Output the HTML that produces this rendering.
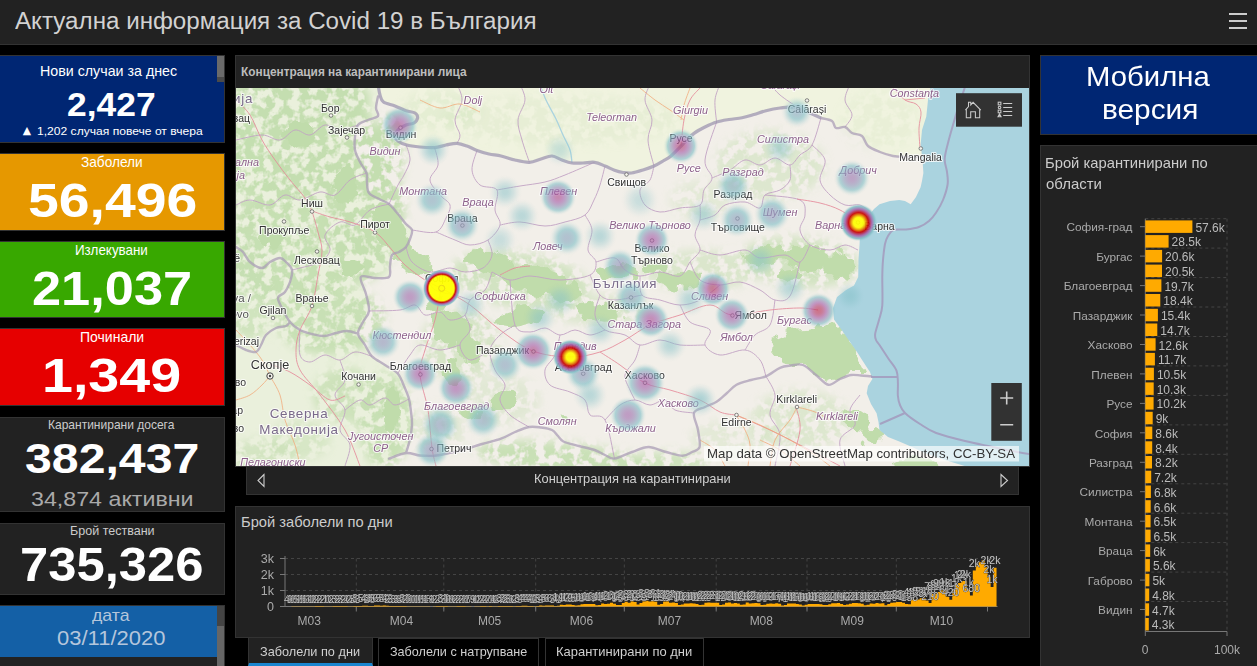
<!DOCTYPE html>
<html lang="bg">
<head>
<meta charset="utf-8">
<title>Актуална информация за Covid 19 в България</title>
<style>
*{box-sizing:border-box;margin:0;padding:0}
html,body{width:1257px;height:666px;overflow:hidden;background:#000;font-family:"Liberation Sans",sans-serif;color:#ccc}
.abs{position:absolute}
.t{position:absolute;white-space:nowrap;line-height:1;transform-origin:0 0}
#hdr{left:0;top:0;width:1257px;height:45px;background:#222;border-bottom:1px solid #333}
.card{position:absolute;left:0;width:225px;border:1px solid #333;border-left:none;overflow:hidden}
.panel{position:absolute;background:#222;border:1px solid #333}
svg{position:absolute;left:0;top:0}
svg text{font-family:"Liberation Sans",sans-serif}
</style>
</head>
<body>
<div id="hdr" class="abs">
<div class="t" style="left:14.7px;top:10.4px;font-size:23.5px;color:#d2d2d2;transform:scaleX(1.0282);">Актуална информация за Covid 19 в България</div>
<div class="abs" style="left:1229px;top:13px;width:18px;height:2px;background:#ccc"></div>
<div class="abs" style="left:1229px;top:20px;width:18px;height:2px;background:#ccc"></div>
<div class="abs" style="left:1229px;top:27px;width:18px;height:2px;background:#ccc"></div>
</div>

<div class="card" style="top:55px;height:88px;background:#002673">
  <div class="abs" style="left:217px;top:0;width:8px;height:21px;background:#6a6a6a"></div>
  <div class="abs" style="left:217px;top:21px;width:8px;height:5px;background:#4a4a4a"></div>
</div>
<div class="card" style="top:153px;height:78px;background:#e69800"></div>
<div class="card" style="top:241px;height:77px;background:#38a800"></div>
<div class="card" style="top:328px;height:78px;background:#e60000"></div>
<div class="card" style="top:417px;height:95px;background:#222"></div>
<div class="card" style="top:523px;height:72px;background:#222"></div>
<div class="card" style="top:605px;height:70px;background:#222">
  <div class="abs" style="left:0;top:0;width:217px;height:51px;background:#1460a6"></div>
  <div class="abs" style="left:217px;top:0;width:8px;height:20px;background:#444"></div>
  <div class="abs" style="left:217px;top:20px;width:8px;height:50px;background:#666"></div>
</div>
<div class="t" style="left:39.7px;top:64.2px;font-size:14.2px;color:#fff;transform:scaleX(1.0039);">Нови случаи за днес</div>
<div class="t" style="left:67.4px;top:88.2px;font-size:33.5px;color:#fff;transform:scaleX(1.0581);font-weight:bold;">2,427</div>
<div class="t" style="left:22.8px;top:126.2px;font-size:10.8px;color:#fff;font-family:'DejaVu Sans',sans-serif">▲</div>
<div class="t" style="left:36.6px;top:126.4px;font-size:11.2px;color:#fff;transform:scaleX(1.0804);">1,202 случая повече от вчера</div>
<div class="t" style="left:80.9px;top:155.1px;font-size:14.2px;color:#fff;transform:scaleX(0.9637);">Заболели</div>
<div class="t" style="left:27.7px;top:176.1px;font-size:49px;color:#fff;transform:scaleX(1.1287);font-weight:bold;">56,496</div>
<div class="t" style="left:75.4px;top:243.0px;font-size:14.2px;color:#fff;transform:scaleX(0.9437);">Излекувани</div>
<div class="t" style="left:32.0px;top:263.5px;font-size:49px;color:#fff;transform:scaleX(1.0683);font-weight:bold;">21,037</div>
<div class="t" style="left:80.0px;top:329.9px;font-size:14.2px;color:#fff;transform:scaleX(0.9869);">Починали</div>
<div class="t" style="left:42.3px;top:350.6px;font-size:49px;color:#fff;transform:scaleX(1.1343);font-weight:bold;">1,349</div>
<div class="t" style="left:47.7px;top:418.5px;font-size:12.2px;color:#ccc;transform:scaleX(0.9853);">Карантинирани досега</div>
<div class="t" style="left:24.5px;top:436.8px;font-size:43px;color:#fff;transform:scaleX(1.1214);font-weight:bold;">382,437</div>
<div class="t" style="left:30.7px;top:487.6px;font-size:21px;color:#aaa;transform:scaleX(1.1058);">34,874 активни</div>
<div class="t" style="left:70.0px;top:524.6px;font-size:12.2px;color:#ccc;transform:scaleX(1.0280);">Брой тествани</div>
<div class="t" style="left:20.3px;top:540.3px;font-size:49px;color:#fff;transform:scaleX(1.0353);font-weight:bold;">735,326</div>
<div class="t" style="left:92.1px;top:607.0px;font-size:17px;color:#b4c6dc;transform:scaleX(1.0389);">дата</div>
<div class="t" style="left:57.0px;top:627.9px;font-size:20.5px;color:#b4c6dc;transform:scaleX(1.0724);">03/11/2020</div>
<div class="panel" style="left:235px;top:55px;width:795px;height:412px"></div>
<div class="panel" style="left:246px;top:466px;width:773px;height:29px"></div>
<svg width="1257" height="666" viewBox="0 0 1257 666">
<defs><clipPath id="mc"><rect x="236" y="88" width="793" height="378"/></clipPath>
<filter id="b6" x="-20%" y="-20%" width="140%" height="140%"><feGaussianBlur stdDeviation="5"/></filter>
<filter id="b3" x="-20%" y="-20%" width="140%" height="140%"><feGaussianBlur stdDeviation="2.5"/></filter>
<filter id="mot" x="0" y="0" width="100%" height="100%" filterUnits="userSpaceOnUse" primitiveUnits="userSpaceOnUse"><feGaussianBlur in="SourceGraphic" stdDeviation="5" result="bl"/><feTurbulence type="fractalNoise" baseFrequency="0.11" numOctaves="3" seed="4" result="n"/><feColorMatrix in="n" type="matrix" values="0 0 0 0 0  0 0 0 0 0  0 0 0 0 0  6 0 0 0 -2.35" result="na"/><feComposite in="bl" in2="na" operator="in"/></filter>
<filter id="rough" x="0" y="0" width="100%" height="100%" filterUnits="userSpaceOnUse" primitiveUnits="userSpaceOnUse"><feTurbulence type="fractalNoise" baseFrequency="0.09" numOctaves="2" seed="9" result="n"/><feDisplacementMap in="SourceGraphic" in2="n" scale="16" xChannelSelector="R" yChannelSelector="G"/></filter>
<radialGradient id="h3"><stop offset="0.000" stop-color="#85c1c8" stop-opacity="0.38"/><stop offset="0.062" stop-color="#85c1c8" stop-opacity="0.38"/><stop offset="0.125" stop-color="#85c1c8" stop-opacity="0.37"/><stop offset="0.188" stop-color="#85c1c8" stop-opacity="0.36"/><stop offset="0.250" stop-color="#85c1c8" stop-opacity="0.34"/><stop offset="0.312" stop-color="#85c1c8" stop-opacity="0.31"/><stop offset="0.375" stop-color="#85c1c8" stop-opacity="0.28"/><stop offset="0.438" stop-color="#85c1c8" stop-opacity="0.25"/><stop offset="0.500" stop-color="#85c1c8" stop-opacity="0.22"/><stop offset="0.562" stop-color="#85c1c8" stop-opacity="0.18"/><stop offset="0.625" stop-color="#85c1c8" stop-opacity="0.14"/><stop offset="0.688" stop-color="#85c1c8" stop-opacity="0.11"/><stop offset="0.750" stop-color="#85c1c8" stop-opacity="0.07"/><stop offset="0.812" stop-color="#85c1c8" stop-opacity="0.04"/><stop offset="0.875" stop-color="#85c1c8" stop-opacity="0.02"/><stop offset="0.938" stop-color="#85c1c8" stop-opacity="0.01"/><stop offset="1.000" stop-color="#85c1c8" stop-opacity="0.00"/></radialGradient><radialGradient id="h4"><stop offset="0.000" stop-color="#85c1c8" stop-opacity="0.51"/><stop offset="0.062" stop-color="#85c1c8" stop-opacity="0.51"/><stop offset="0.125" stop-color="#85c1c8" stop-opacity="0.50"/><stop offset="0.188" stop-color="#85c1c8" stop-opacity="0.48"/><stop offset="0.250" stop-color="#85c1c8" stop-opacity="0.45"/><stop offset="0.312" stop-color="#85c1c8" stop-opacity="0.42"/><stop offset="0.375" stop-color="#85c1c8" stop-opacity="0.38"/><stop offset="0.438" stop-color="#85c1c8" stop-opacity="0.33"/><stop offset="0.500" stop-color="#85c1c8" stop-opacity="0.29"/><stop offset="0.562" stop-color="#85c1c8" stop-opacity="0.24"/><stop offset="0.625" stop-color="#85c1c8" stop-opacity="0.19"/><stop offset="0.688" stop-color="#85c1c8" stop-opacity="0.14"/><stop offset="0.750" stop-color="#85c1c8" stop-opacity="0.10"/><stop offset="0.812" stop-color="#85c1c8" stop-opacity="0.06"/><stop offset="0.875" stop-color="#85c1c8" stop-opacity="0.03"/><stop offset="0.938" stop-color="#85c1c8" stop-opacity="0.01"/><stop offset="1.000" stop-color="#85c1c8" stop-opacity="0.00"/></radialGradient><radialGradient id="h5"><stop offset="0.000" stop-color="#85c1c8" stop-opacity="0.64"/><stop offset="0.062" stop-color="#85c1c8" stop-opacity="0.64"/><stop offset="0.125" stop-color="#85c1c8" stop-opacity="0.62"/><stop offset="0.188" stop-color="#85c1c8" stop-opacity="0.60"/><stop offset="0.250" stop-color="#85c1c8" stop-opacity="0.56"/><stop offset="0.312" stop-color="#85c1c8" stop-opacity="0.52"/><stop offset="0.375" stop-color="#85c1c8" stop-opacity="0.47"/><stop offset="0.438" stop-color="#85c1c8" stop-opacity="0.42"/><stop offset="0.500" stop-color="#85c1c8" stop-opacity="0.36"/><stop offset="0.562" stop-color="#85c1c8" stop-opacity="0.30"/><stop offset="0.625" stop-color="#85c1c8" stop-opacity="0.24"/><stop offset="0.688" stop-color="#85c1c8" stop-opacity="0.18"/><stop offset="0.750" stop-color="#85c1c8" stop-opacity="0.12"/><stop offset="0.812" stop-color="#85c1c8" stop-opacity="0.07"/><stop offset="0.875" stop-color="#85c1c8" stop-opacity="0.04"/><stop offset="0.938" stop-color="#85c1c8" stop-opacity="0.01"/><stop offset="1.000" stop-color="#85c1c8" stop-opacity="0.00"/></radialGradient><radialGradient id="h8"><stop offset="0.000" stop-color="#8caec2" stop-opacity="0.64"/><stop offset="0.062" stop-color="#8baec2" stop-opacity="0.64"/><stop offset="0.125" stop-color="#8bafc2" stop-opacity="0.64"/><stop offset="0.188" stop-color="#8ab1c3" stop-opacity="0.64"/><stop offset="0.250" stop-color="#89b4c4" stop-opacity="0.64"/><stop offset="0.312" stop-color="#88b7c5" stop-opacity="0.64"/><stop offset="0.375" stop-color="#87bbc6" stop-opacity="0.64"/><stop offset="0.438" stop-color="#86c0c8" stop-opacity="0.64"/><stop offset="0.500" stop-color="#85c1c8" stop-opacity="0.58"/><stop offset="0.562" stop-color="#85c1c8" stop-opacity="0.48"/><stop offset="0.625" stop-color="#85c1c8" stop-opacity="0.38"/><stop offset="0.688" stop-color="#85c1c8" stop-opacity="0.28"/><stop offset="0.750" stop-color="#85c1c8" stop-opacity="0.20"/><stop offset="0.812" stop-color="#85c1c8" stop-opacity="0.12"/><stop offset="0.875" stop-color="#85c1c8" stop-opacity="0.06"/><stop offset="0.938" stop-color="#85c1c8" stop-opacity="0.02"/><stop offset="1.000" stop-color="#85c1c8" stop-opacity="0.00"/></radialGradient><radialGradient id="h9"><stop offset="0.000" stop-color="#8ea7c0" stop-opacity="0.64"/><stop offset="0.062" stop-color="#8ea8c0" stop-opacity="0.64"/><stop offset="0.125" stop-color="#8da9c1" stop-opacity="0.64"/><stop offset="0.188" stop-color="#8cabc1" stop-opacity="0.64"/><stop offset="0.250" stop-color="#8baec2" stop-opacity="0.64"/><stop offset="0.312" stop-color="#8ab2c3" stop-opacity="0.64"/><stop offset="0.375" stop-color="#89b6c5" stop-opacity="0.64"/><stop offset="0.438" stop-color="#87bbc6" stop-opacity="0.64"/><stop offset="0.500" stop-color="#85c1c8" stop-opacity="0.64"/><stop offset="0.562" stop-color="#85c1c8" stop-opacity="0.54"/><stop offset="0.625" stop-color="#85c1c8" stop-opacity="0.43"/><stop offset="0.688" stop-color="#85c1c8" stop-opacity="0.32"/><stop offset="0.750" stop-color="#85c1c8" stop-opacity="0.22"/><stop offset="0.812" stop-color="#85c1c8" stop-opacity="0.13"/><stop offset="0.875" stop-color="#85c1c8" stop-opacity="0.06"/><stop offset="0.938" stop-color="#85c1c8" stop-opacity="0.02"/><stop offset="1.000" stop-color="#85c1c8" stop-opacity="0.00"/></radialGradient><radialGradient id="h10"><stop offset="0.000" stop-color="#90a1be" stop-opacity="0.64"/><stop offset="0.062" stop-color="#90a1be" stop-opacity="0.64"/><stop offset="0.125" stop-color="#8fa3bf" stop-opacity="0.64"/><stop offset="0.188" stop-color="#8ea5bf" stop-opacity="0.64"/><stop offset="0.250" stop-color="#8da9c0" stop-opacity="0.64"/><stop offset="0.312" stop-color="#8cadc2" stop-opacity="0.64"/><stop offset="0.375" stop-color="#8ab2c3" stop-opacity="0.64"/><stop offset="0.438" stop-color="#88b7c5" stop-opacity="0.64"/><stop offset="0.500" stop-color="#86bdc7" stop-opacity="0.64"/><stop offset="0.562" stop-color="#85c1c8" stop-opacity="0.60"/><stop offset="0.625" stop-color="#85c1c8" stop-opacity="0.48"/><stop offset="0.688" stop-color="#85c1c8" stop-opacity="0.36"/><stop offset="0.750" stop-color="#85c1c8" stop-opacity="0.24"/><stop offset="0.812" stop-color="#85c1c8" stop-opacity="0.15"/><stop offset="0.875" stop-color="#85c1c8" stop-opacity="0.07"/><stop offset="0.938" stop-color="#85c1c8" stop-opacity="0.02"/><stop offset="1.000" stop-color="#85c1c8" stop-opacity="0.00"/></radialGradient><radialGradient id="h11"><stop offset="0.000" stop-color="#929bbc" stop-opacity="0.64"/><stop offset="0.062" stop-color="#929bbc" stop-opacity="0.64"/><stop offset="0.125" stop-color="#929dbd" stop-opacity="0.64"/><stop offset="0.188" stop-color="#919fbe" stop-opacity="0.64"/><stop offset="0.250" stop-color="#8fa3bf" stop-opacity="0.64"/><stop offset="0.312" stop-color="#8ea8c0" stop-opacity="0.64"/><stop offset="0.375" stop-color="#8cadc2" stop-opacity="0.64"/><stop offset="0.438" stop-color="#8ab3c4" stop-opacity="0.64"/><stop offset="0.500" stop-color="#88b9c6" stop-opacity="0.64"/><stop offset="0.562" stop-color="#85c0c8" stop-opacity="0.64"/><stop offset="0.625" stop-color="#85c1c8" stop-opacity="0.52"/><stop offset="0.688" stop-color="#85c1c8" stop-opacity="0.39"/><stop offset="0.750" stop-color="#85c1c8" stop-opacity="0.27"/><stop offset="0.812" stop-color="#85c1c8" stop-opacity="0.16"/><stop offset="0.875" stop-color="#85c1c8" stop-opacity="0.08"/><stop offset="0.938" stop-color="#85c1c8" stop-opacity="0.02"/><stop offset="1.000" stop-color="#85c1c8" stop-opacity="0.00"/></radialGradient><radialGradient id="h12"><stop offset="0.000" stop-color="#9594ba" stop-opacity="0.64"/><stop offset="0.062" stop-color="#9595ba" stop-opacity="0.64"/><stop offset="0.125" stop-color="#9497bb" stop-opacity="0.64"/><stop offset="0.188" stop-color="#939abc" stop-opacity="0.64"/><stop offset="0.250" stop-color="#919ebd" stop-opacity="0.64"/><stop offset="0.312" stop-color="#8fa2be" stop-opacity="0.64"/><stop offset="0.375" stop-color="#8da8c0" stop-opacity="0.64"/><stop offset="0.438" stop-color="#8bafc2" stop-opacity="0.64"/><stop offset="0.500" stop-color="#89b6c4" stop-opacity="0.64"/><stop offset="0.562" stop-color="#86bdc7" stop-opacity="0.64"/><stop offset="0.625" stop-color="#85c1c8" stop-opacity="0.57"/><stop offset="0.688" stop-color="#85c1c8" stop-opacity="0.43"/><stop offset="0.750" stop-color="#85c1c8" stop-opacity="0.29"/><stop offset="0.812" stop-color="#85c1c8" stop-opacity="0.18"/><stop offset="0.875" stop-color="#85c1c8" stop-opacity="0.08"/><stop offset="0.938" stop-color="#85c1c8" stop-opacity="0.02"/><stop offset="1.000" stop-color="#85c1c8" stop-opacity="0.00"/></radialGradient><radialGradient id="h16"><stop offset="0.000" stop-color="#9e7bb2" stop-opacity="0.64"/><stop offset="0.062" stop-color="#9e7bb2" stop-opacity="0.64"/><stop offset="0.125" stop-color="#9d7eb3" stop-opacity="0.64"/><stop offset="0.188" stop-color="#9c82b4" stop-opacity="0.64"/><stop offset="0.250" stop-color="#9a87b6" stop-opacity="0.64"/><stop offset="0.312" stop-color="#978eb8" stop-opacity="0.64"/><stop offset="0.375" stop-color="#9495ba" stop-opacity="0.64"/><stop offset="0.438" stop-color="#919ebd" stop-opacity="0.64"/><stop offset="0.500" stop-color="#8ea7c0" stop-opacity="0.64"/><stop offset="0.562" stop-color="#8ab1c3" stop-opacity="0.64"/><stop offset="0.625" stop-color="#87bbc6" stop-opacity="0.64"/><stop offset="0.688" stop-color="#85c1c8" stop-opacity="0.57"/><stop offset="0.750" stop-color="#85c1c8" stop-opacity="0.39"/><stop offset="0.812" stop-color="#85c1c8" stop-opacity="0.24"/><stop offset="0.875" stop-color="#85c1c8" stop-opacity="0.11"/><stop offset="0.938" stop-color="#85c1c8" stop-opacity="0.03"/><stop offset="1.000" stop-color="#85c1c8" stop-opacity="0.00"/></radialGradient><radialGradient id="h18"><stop offset="0.000" stop-color="#a36eae" stop-opacity="0.64"/><stop offset="0.062" stop-color="#a26fae" stop-opacity="0.64"/><stop offset="0.125" stop-color="#a171af" stop-opacity="0.64"/><stop offset="0.188" stop-color="#a076b0" stop-opacity="0.64"/><stop offset="0.250" stop-color="#9e7cb2" stop-opacity="0.64"/><stop offset="0.312" stop-color="#9b83b5" stop-opacity="0.64"/><stop offset="0.375" stop-color="#988cb7" stop-opacity="0.64"/><stop offset="0.438" stop-color="#9496ba" stop-opacity="0.64"/><stop offset="0.500" stop-color="#90a0be" stop-opacity="0.64"/><stop offset="0.562" stop-color="#8dabc1" stop-opacity="0.64"/><stop offset="0.625" stop-color="#89b6c5" stop-opacity="0.64"/><stop offset="0.688" stop-color="#85c1c8" stop-opacity="0.64"/><stop offset="0.750" stop-color="#85c1c8" stop-opacity="0.44"/><stop offset="0.812" stop-color="#85c1c8" stop-opacity="0.27"/><stop offset="0.875" stop-color="#85c1c8" stop-opacity="0.13"/><stop offset="0.938" stop-color="#85c1c8" stop-opacity="0.03"/><stop offset="1.000" stop-color="#85c1c8" stop-opacity="0.00"/></radialGradient><radialGradient id="h19"><stop offset="0.000" stop-color="#a567ac" stop-opacity="0.64"/><stop offset="0.062" stop-color="#a468ac" stop-opacity="0.64"/><stop offset="0.125" stop-color="#a46bad" stop-opacity="0.64"/><stop offset="0.188" stop-color="#a270af" stop-opacity="0.64"/><stop offset="0.250" stop-color="#a076b1" stop-opacity="0.64"/><stop offset="0.312" stop-color="#9d7eb3" stop-opacity="0.64"/><stop offset="0.375" stop-color="#9a87b6" stop-opacity="0.64"/><stop offset="0.438" stop-color="#9691b9" stop-opacity="0.64"/><stop offset="0.500" stop-color="#929dbd" stop-opacity="0.64"/><stop offset="0.562" stop-color="#8ea8c0" stop-opacity="0.64"/><stop offset="0.625" stop-color="#8ab4c4" stop-opacity="0.64"/><stop offset="0.688" stop-color="#86bfc7" stop-opacity="0.64"/><stop offset="0.750" stop-color="#85c1c8" stop-opacity="0.47"/><stop offset="0.812" stop-color="#85c1c8" stop-opacity="0.28"/><stop offset="0.875" stop-color="#85c1c8" stop-opacity="0.13"/><stop offset="0.938" stop-color="#85c1c8" stop-opacity="0.04"/><stop offset="1.000" stop-color="#85c1c8" stop-opacity="0.00"/></radialGradient><radialGradient id="h21"><stop offset="0.000" stop-color="#a95ca2" stop-opacity="0.64"/><stop offset="0.062" stop-color="#a85da3" stop-opacity="0.64"/><stop offset="0.125" stop-color="#a85fa7" stop-opacity="0.64"/><stop offset="0.188" stop-color="#a664ab" stop-opacity="0.64"/><stop offset="0.250" stop-color="#a46bad" stop-opacity="0.64"/><stop offset="0.312" stop-color="#a174b0" stop-opacity="0.64"/><stop offset="0.375" stop-color="#9d7eb3" stop-opacity="0.64"/><stop offset="0.438" stop-color="#9989b7" stop-opacity="0.64"/><stop offset="0.500" stop-color="#9495ba" stop-opacity="0.64"/><stop offset="0.562" stop-color="#90a2be" stop-opacity="0.64"/><stop offset="0.625" stop-color="#8bafc2" stop-opacity="0.64"/><stop offset="0.688" stop-color="#87bcc6" stop-opacity="0.64"/><stop offset="0.750" stop-color="#85c1c8" stop-opacity="0.51"/><stop offset="0.812" stop-color="#85c1c8" stop-opacity="0.31"/><stop offset="0.875" stop-color="#85c1c8" stop-opacity="0.15"/><stop offset="0.938" stop-color="#85c1c8" stop-opacity="0.04"/><stop offset="1.000" stop-color="#85c1c8" stop-opacity="0.00"/></radialGradient><radialGradient id="h22"><stop offset="0.000" stop-color="#aa5799" stop-opacity="0.64"/><stop offset="0.062" stop-color="#aa589b" stop-opacity="0.64"/><stop offset="0.125" stop-color="#a95b9f" stop-opacity="0.64"/><stop offset="0.188" stop-color="#a85fa6" stop-opacity="0.64"/><stop offset="0.250" stop-color="#a665ab" stop-opacity="0.64"/><stop offset="0.312" stop-color="#a26eae" stop-opacity="0.64"/><stop offset="0.375" stop-color="#9f79b2" stop-opacity="0.64"/><stop offset="0.438" stop-color="#9b85b5" stop-opacity="0.64"/><stop offset="0.500" stop-color="#9692b9" stop-opacity="0.64"/><stop offset="0.562" stop-color="#919fbd" stop-opacity="0.64"/><stop offset="0.625" stop-color="#8cadc2" stop-opacity="0.64"/><stop offset="0.688" stop-color="#87bac6" stop-opacity="0.64"/><stop offset="0.750" stop-color="#85c1c8" stop-opacity="0.54"/><stop offset="0.812" stop-color="#85c1c8" stop-opacity="0.33"/><stop offset="0.875" stop-color="#85c1c8" stop-opacity="0.15"/><stop offset="0.938" stop-color="#85c1c8" stop-opacity="0.04"/><stop offset="1.000" stop-color="#85c1c8" stop-opacity="0.00"/></radialGradient><radialGradient id="h23"><stop offset="0.000" stop-color="#ac5391" stop-opacity="0.64"/><stop offset="0.062" stop-color="#ac5392" stop-opacity="0.64"/><stop offset="0.125" stop-color="#ab5697" stop-opacity="0.64"/><stop offset="0.188" stop-color="#a95a9e" stop-opacity="0.64"/><stop offset="0.250" stop-color="#a760a8" stop-opacity="0.64"/><stop offset="0.312" stop-color="#a469ad" stop-opacity="0.64"/><stop offset="0.375" stop-color="#a074b0" stop-opacity="0.64"/><stop offset="0.438" stop-color="#9c81b4" stop-opacity="0.64"/><stop offset="0.500" stop-color="#978eb8" stop-opacity="0.64"/><stop offset="0.562" stop-color="#929cbd" stop-opacity="0.64"/><stop offset="0.625" stop-color="#8daac1" stop-opacity="0.64"/><stop offset="0.688" stop-color="#88b8c5" stop-opacity="0.64"/><stop offset="0.750" stop-color="#85c1c8" stop-opacity="0.56"/><stop offset="0.812" stop-color="#85c1c8" stop-opacity="0.34"/><stop offset="0.875" stop-color="#85c1c8" stop-opacity="0.16"/><stop offset="0.938" stop-color="#85c1c8" stop-opacity="0.04"/><stop offset="1.000" stop-color="#85c1c8" stop-opacity="0.00"/></radialGradient><radialGradient id="h24"><stop offset="0.000" stop-color="#ad4e88" stop-opacity="0.64"/><stop offset="0.062" stop-color="#ad4f8a" stop-opacity="0.64"/><stop offset="0.125" stop-color="#ac518f" stop-opacity="0.64"/><stop offset="0.188" stop-color="#ab5696" stop-opacity="0.64"/><stop offset="0.250" stop-color="#a95ca1" stop-opacity="0.64"/><stop offset="0.312" stop-color="#a664ab" stop-opacity="0.64"/><stop offset="0.375" stop-color="#a270af" stop-opacity="0.64"/><stop offset="0.438" stop-color="#9e7db3" stop-opacity="0.64"/><stop offset="0.500" stop-color="#988bb7" stop-opacity="0.64"/><stop offset="0.562" stop-color="#9399bc" stop-opacity="0.64"/><stop offset="0.625" stop-color="#8ea8c0" stop-opacity="0.64"/><stop offset="0.688" stop-color="#89b6c5" stop-opacity="0.64"/><stop offset="0.750" stop-color="#85c1c8" stop-opacity="0.59"/><stop offset="0.812" stop-color="#85c1c8" stop-opacity="0.35"/><stop offset="0.875" stop-color="#85c1c8" stop-opacity="0.17"/><stop offset="0.938" stop-color="#85c1c8" stop-opacity="0.05"/><stop offset="1.000" stop-color="#85c1c8" stop-opacity="0.00"/></radialGradient><radialGradient id="h26"><stop offset="0.000" stop-color="#b14477" stop-opacity="0.64"/><stop offset="0.062" stop-color="#b04579" stop-opacity="0.64"/><stop offset="0.125" stop-color="#af487e" stop-opacity="0.64"/><stop offset="0.188" stop-color="#ae4d87" stop-opacity="0.64"/><stop offset="0.250" stop-color="#ac5392" stop-opacity="0.64"/><stop offset="0.312" stop-color="#a95ba0" stop-opacity="0.64"/><stop offset="0.375" stop-color="#a566ac" stop-opacity="0.64"/><stop offset="0.438" stop-color="#a074b0" stop-opacity="0.64"/><stop offset="0.500" stop-color="#9b83b5" stop-opacity="0.64"/><stop offset="0.562" stop-color="#9593ba" stop-opacity="0.64"/><stop offset="0.625" stop-color="#8fa3bf" stop-opacity="0.64"/><stop offset="0.688" stop-color="#8ab3c4" stop-opacity="0.64"/><stop offset="0.750" stop-color="#85c1c8" stop-opacity="0.64"/><stop offset="0.812" stop-color="#85c1c8" stop-opacity="0.38"/><stop offset="0.875" stop-color="#85c1c8" stop-opacity="0.18"/><stop offset="0.938" stop-color="#85c1c8" stop-opacity="0.05"/><stop offset="1.000" stop-color="#85c1c8" stop-opacity="0.00"/></radialGradient><radialGradient id="h27"><stop offset="0.000" stop-color="#b33f6f" stop-opacity="0.64"/><stop offset="0.062" stop-color="#b24071" stop-opacity="0.64"/><stop offset="0.125" stop-color="#b14376" stop-opacity="0.64"/><stop offset="0.188" stop-color="#af487f" stop-opacity="0.64"/><stop offset="0.250" stop-color="#ad4f8b" stop-opacity="0.64"/><stop offset="0.312" stop-color="#aa5799" stop-opacity="0.64"/><stop offset="0.375" stop-color="#a761aa" stop-opacity="0.64"/><stop offset="0.438" stop-color="#a270af" stop-opacity="0.64"/><stop offset="0.500" stop-color="#9c80b4" stop-opacity="0.64"/><stop offset="0.562" stop-color="#9690b9" stop-opacity="0.64"/><stop offset="0.625" stop-color="#90a1be" stop-opacity="0.64"/><stop offset="0.688" stop-color="#8bb1c3" stop-opacity="0.64"/><stop offset="0.750" stop-color="#85c0c8" stop-opacity="0.64"/><stop offset="0.812" stop-color="#85c1c8" stop-opacity="0.40"/><stop offset="0.875" stop-color="#85c1c8" stop-opacity="0.19"/><stop offset="0.938" stop-color="#85c1c8" stop-opacity="0.05"/><stop offset="1.000" stop-color="#85c1c8" stop-opacity="0.00"/></radialGradient><radialGradient id="h30"><stop offset="0.000" stop-color="#b83055" stop-opacity="0.64"/><stop offset="0.062" stop-color="#b83157" stop-opacity="0.64"/><stop offset="0.125" stop-color="#b6355d" stop-opacity="0.64"/><stop offset="0.188" stop-color="#b43a67" stop-opacity="0.64"/><stop offset="0.250" stop-color="#b14274" stop-opacity="0.64"/><stop offset="0.312" stop-color="#ae4c85" stop-opacity="0.64"/><stop offset="0.375" stop-color="#aa5798" stop-opacity="0.64"/><stop offset="0.438" stop-color="#a663ab" stop-opacity="0.64"/><stop offset="0.500" stop-color="#a075b0" stop-opacity="0.64"/><stop offset="0.562" stop-color="#9a87b6" stop-opacity="0.64"/><stop offset="0.625" stop-color="#939abc" stop-opacity="0.64"/><stop offset="0.688" stop-color="#8cacc1" stop-opacity="0.64"/><stop offset="0.750" stop-color="#87bcc7" stop-opacity="0.64"/><stop offset="0.812" stop-color="#85c1c8" stop-opacity="0.44"/><stop offset="0.875" stop-color="#85c1c8" stop-opacity="0.21"/><stop offset="0.938" stop-color="#85c1c8" stop-opacity="0.06"/><stop offset="1.000" stop-color="#85c1c8" stop-opacity="0.00"/></radialGradient><radialGradient id="hv"><stop offset="0.000" stop-color="#ffff00" stop-opacity="0.92"/><stop offset="0.025" stop-color="#ffff00" stop-opacity="0.92"/><stop offset="0.050" stop-color="#ffff00" stop-opacity="0.92"/><stop offset="0.075" stop-color="#ffff00" stop-opacity="0.92"/><stop offset="0.100" stop-color="#ffff00" stop-opacity="0.92"/><stop offset="0.125" stop-color="#ffff00" stop-opacity="0.92"/><stop offset="0.150" stop-color="#ffff00" stop-opacity="0.92"/><stop offset="0.175" stop-color="#ffff00" stop-opacity="0.92"/><stop offset="0.200" stop-color="#ffff00" stop-opacity="0.92"/><stop offset="0.225" stop-color="#ffff00" stop-opacity="0.92"/><stop offset="0.250" stop-color="#ffff00" stop-opacity="0.92"/><stop offset="0.275" stop-color="#fdf600" stop-opacity="0.92"/><stop offset="0.300" stop-color="#f9e100" stop-opacity="0.92"/><stop offset="0.325" stop-color="#f4cc00" stop-opacity="0.92"/><stop offset="0.350" stop-color="#efb500" stop-opacity="0.92"/><stop offset="0.375" stop-color="#ea9d00" stop-opacity="0.92"/><stop offset="0.400" stop-color="#e48400" stop-opacity="0.92"/><stop offset="0.425" stop-color="#df6a00" stop-opacity="0.92"/><stop offset="0.450" stop-color="#d94f00" stop-opacity="0.92"/><stop offset="0.475" stop-color="#d33300" stop-opacity="0.92"/><stop offset="0.500" stop-color="#cd1600" stop-opacity="0.92"/><stop offset="0.525" stop-color="#c70305" stop-opacity="0.92"/><stop offset="0.550" stop-color="#c2111e" stop-opacity="0.92"/><stop offset="0.575" stop-color="#be1f36" stop-opacity="0.92"/><stop offset="0.600" stop-color="#b92d4f" stop-opacity="0.92"/><stop offset="0.625" stop-color="#b43b67" stop-opacity="0.92"/><stop offset="0.650" stop-color="#af4980" stop-opacity="0.92"/><stop offset="0.675" stop-color="#ab5697" stop-opacity="0.92"/><stop offset="0.700" stop-color="#a664ab" stop-opacity="0.92"/><stop offset="0.725" stop-color="#a075b0" stop-opacity="0.92"/><stop offset="0.750" stop-color="#9a85b5" stop-opacity="0.92"/><stop offset="0.775" stop-color="#9594ba" stop-opacity="0.92"/><stop offset="0.800" stop-color="#8fa3bf" stop-opacity="0.92"/><stop offset="0.825" stop-color="#8bb0c3" stop-opacity="0.92"/><stop offset="0.850" stop-color="#87bcc6" stop-opacity="0.92"/><stop offset="0.875" stop-color="#85c1c8" stop-opacity="0.76"/><stop offset="0.900" stop-color="#85c1c8" stop-opacity="0.50"/><stop offset="0.925" stop-color="#85c1c8" stop-opacity="0.29"/><stop offset="0.950" stop-color="#85c1c8" stop-opacity="0.13"/><stop offset="0.975" stop-color="#85c1c8" stop-opacity="0.03"/><stop offset="1.000" stop-color="#85c1c8" stop-opacity="0.00"/></radialGradient><radialGradient id="hp"><stop offset="0.000" stop-color="#ffff00" stop-opacity="0.92"/><stop offset="0.025" stop-color="#ffff00" stop-opacity="0.92"/><stop offset="0.050" stop-color="#ffff00" stop-opacity="0.92"/><stop offset="0.075" stop-color="#ffff00" stop-opacity="0.92"/><stop offset="0.100" stop-color="#ffff00" stop-opacity="0.92"/><stop offset="0.125" stop-color="#ffff00" stop-opacity="0.92"/><stop offset="0.150" stop-color="#ffff00" stop-opacity="0.92"/><stop offset="0.175" stop-color="#ffff00" stop-opacity="0.92"/><stop offset="0.200" stop-color="#ffff00" stop-opacity="0.92"/><stop offset="0.225" stop-color="#ffff00" stop-opacity="0.92"/><stop offset="0.250" stop-color="#fcf200" stop-opacity="0.92"/><stop offset="0.275" stop-color="#f8e000" stop-opacity="0.92"/><stop offset="0.300" stop-color="#f4cc00" stop-opacity="0.92"/><stop offset="0.325" stop-color="#f0b800" stop-opacity="0.92"/><stop offset="0.350" stop-color="#eba100" stop-opacity="0.92"/><stop offset="0.375" stop-color="#e68a00" stop-opacity="0.92"/><stop offset="0.400" stop-color="#e17200" stop-opacity="0.92"/><stop offset="0.425" stop-color="#db5800" stop-opacity="0.92"/><stop offset="0.450" stop-color="#d53e00" stop-opacity="0.92"/><stop offset="0.475" stop-color="#d02300" stop-opacity="0.92"/><stop offset="0.500" stop-color="#ca0800" stop-opacity="0.92"/><stop offset="0.525" stop-color="#c50910" stop-opacity="0.92"/><stop offset="0.550" stop-color="#c01728" stop-opacity="0.92"/><stop offset="0.575" stop-color="#bc2440" stop-opacity="0.92"/><stop offset="0.600" stop-color="#b73258" stop-opacity="0.92"/><stop offset="0.625" stop-color="#b23f6f" stop-opacity="0.92"/><stop offset="0.650" stop-color="#ae4d87" stop-opacity="0.92"/><stop offset="0.675" stop-color="#a95a9e" stop-opacity="0.92"/><stop offset="0.700" stop-color="#a468ac" stop-opacity="0.92"/><stop offset="0.725" stop-color="#9f79b1" stop-opacity="0.92"/><stop offset="0.750" stop-color="#9988b6" stop-opacity="0.92"/><stop offset="0.775" stop-color="#9497bb" stop-opacity="0.92"/><stop offset="0.800" stop-color="#8fa5bf" stop-opacity="0.92"/><stop offset="0.825" stop-color="#8ab2c3" stop-opacity="0.92"/><stop offset="0.850" stop-color="#86bdc7" stop-opacity="0.92"/><stop offset="0.875" stop-color="#85c1c8" stop-opacity="0.73"/><stop offset="0.900" stop-color="#85c1c8" stop-opacity="0.48"/><stop offset="0.925" stop-color="#85c1c8" stop-opacity="0.28"/><stop offset="0.950" stop-color="#85c1c8" stop-opacity="0.13"/><stop offset="0.975" stop-color="#85c1c8" stop-opacity="0.03"/><stop offset="1.000" stop-color="#85c1c8" stop-opacity="0.00"/></radialGradient><radialGradient id="hs"><stop offset="0.000" stop-color="#ffff00" stop-opacity="0.95"/><stop offset="0.017" stop-color="#ffff00" stop-opacity="0.95"/><stop offset="0.033" stop-color="#ffff00" stop-opacity="0.95"/><stop offset="0.050" stop-color="#ffff00" stop-opacity="0.95"/><stop offset="0.067" stop-color="#ffff00" stop-opacity="0.95"/><stop offset="0.083" stop-color="#ffff00" stop-opacity="0.95"/><stop offset="0.100" stop-color="#ffff00" stop-opacity="0.95"/><stop offset="0.117" stop-color="#ffff00" stop-opacity="0.95"/><stop offset="0.133" stop-color="#ffff00" stop-opacity="0.95"/><stop offset="0.150" stop-color="#ffff00" stop-opacity="0.95"/><stop offset="0.167" stop-color="#ffff00" stop-opacity="0.95"/><stop offset="0.183" stop-color="#ffff00" stop-opacity="0.95"/><stop offset="0.200" stop-color="#ffff00" stop-opacity="0.95"/><stop offset="0.217" stop-color="#ffff00" stop-opacity="0.95"/><stop offset="0.233" stop-color="#ffff00" stop-opacity="0.95"/><stop offset="0.250" stop-color="#ffff00" stop-opacity="0.95"/><stop offset="0.267" stop-color="#ffff00" stop-opacity="0.95"/><stop offset="0.283" stop-color="#ffff00" stop-opacity="0.95"/><stop offset="0.300" stop-color="#ffff00" stop-opacity="0.95"/><stop offset="0.317" stop-color="#ffff00" stop-opacity="0.95"/><stop offset="0.333" stop-color="#ffff00" stop-opacity="0.95"/><stop offset="0.350" stop-color="#ffff00" stop-opacity="0.95"/><stop offset="0.367" stop-color="#ffff00" stop-opacity="0.95"/><stop offset="0.383" stop-color="#ffff00" stop-opacity="0.95"/><stop offset="0.400" stop-color="#ffff00" stop-opacity="0.95"/><stop offset="0.417" stop-color="#ffff00" stop-opacity="0.95"/><stop offset="0.433" stop-color="#ffff00" stop-opacity="0.95"/><stop offset="0.450" stop-color="#ffff00" stop-opacity="0.95"/><stop offset="0.467" stop-color="#ffff00" stop-opacity="0.95"/><stop offset="0.483" stop-color="#ffff00" stop-opacity="0.95"/><stop offset="0.500" stop-color="#ffff00" stop-opacity="0.95"/><stop offset="0.517" stop-color="#ffff00" stop-opacity="0.95"/><stop offset="0.533" stop-color="#ffff00" stop-opacity="0.95"/><stop offset="0.550" stop-color="#ffff00" stop-opacity="0.95"/><stop offset="0.567" stop-color="#ffff00" stop-opacity="0.95"/><stop offset="0.583" stop-color="#ffff00" stop-opacity="0.95"/><stop offset="0.600" stop-color="#ffff00" stop-opacity="0.95"/><stop offset="0.617" stop-color="#ffff00" stop-opacity="0.95"/><stop offset="0.633" stop-color="#ffff00" stop-opacity="0.95"/><stop offset="0.650" stop-color="#ffff00" stop-opacity="0.95"/><stop offset="0.667" stop-color="#f8de00" stop-opacity="0.95"/><stop offset="0.683" stop-color="#edac00" stop-opacity="0.95"/><stop offset="0.700" stop-color="#e27b00" stop-opacity="0.95"/><stop offset="0.717" stop-color="#d84b00" stop-opacity="0.95"/><stop offset="0.733" stop-color="#ce1c00" stop-opacity="0.95"/><stop offset="0.750" stop-color="#c5080e" stop-opacity="0.95"/><stop offset="0.767" stop-color="#be1d33" stop-opacity="0.95"/><stop offset="0.783" stop-color="#b83156" stop-opacity="0.95"/><stop offset="0.800" stop-color="#b14478" stop-opacity="0.95"/><stop offset="0.817" stop-color="#aa5798" stop-opacity="0.95"/><stop offset="0.833" stop-color="#a469ad" stop-opacity="0.95"/><stop offset="0.850" stop-color="#9d7eb3" stop-opacity="0.95"/><stop offset="0.867" stop-color="#9692b9" stop-opacity="0.95"/><stop offset="0.883" stop-color="#8fa3bf" stop-opacity="0.95"/><stop offset="0.900" stop-color="#8ab3c4" stop-opacity="0.95"/><stop offset="0.917" stop-color="#85c0c8" stop-opacity="0.95"/><stop offset="0.933" stop-color="#85c1c8" stop-opacity="0.63"/><stop offset="0.950" stop-color="#85c1c8" stop-opacity="0.36"/><stop offset="0.967" stop-color="#85c1c8" stop-opacity="0.16"/><stop offset="0.983" stop-color="#85c1c8" stop-opacity="0.04"/><stop offset="1.000" stop-color="#85c1c8" stop-opacity="0.00"/></radialGradient>
</defs>
<g clip-path="url(#mc)">
<rect x="236" y="88" width="793" height="378" fill="#f2efe9"/>
<path d="M378.0 80.0 L378.0 84.0 L380.0 95.0 L383.5 102.0 L395.0 106.0 L406.0 110.7 L415.0 113.0 L417.6 117.8 L414.0 123.0 L406.0 125.0 L398.0 130.0 L395.0 136.0 L398.0 141.0 L406.0 144.7 L420.0 147.0 L434.6 147.6 L446.0 145.0 L457.0 143.3 L467.0 146.0 L477.0 150.4 L489.0 154.0 L501.0 156.0 L515.0 160.0 L529.4 162.3 L541.0 159.0 L552.0 156.0 L562.0 160.0 L572.0 163.0 L583.0 163.0 L594.6 162.3 L605.0 166.0 L614.5 170.3 L623.0 172.5 L631.5 173.0 L643.0 170.0 L654.0 166.0 L663.0 161.0 L671.0 156.0 L683.0 144.0 L694.0 133.4 L705.0 127.0 L716.6 122.0 L729.0 119.5 L742.0 117.8 L754.0 114.5 L766.0 110.7 L780.0 108.0 L797.0 107.0 L810.0 113.0 L821.0 118.0 L821.0 118.0 L832.0 121.0 L836.0 128.0 L845.0 127.0 L852.0 133.0 L862.0 136.0 L868.0 146.0 L880.0 152.0 L893.0 156.0 L905.0 157.0 L921.0 157.0 L930.0 150.0 L935.0 80.0Z" fill="#f0f3df"/>
<path d="M230.0 80.0 L378.0 80.0 L378.0 96.5 L376.0 108.0 L378.0 116.0 L368.0 120.0 L358.0 125.0 L355.0 137.0 L355.0 150.0 L360.0 162.0 L366.5 173.0 L367.0 183.0 L369.0 193.0 L379.0 199.0 L389.0 204.0 L398.0 214.0 L406.0 224.0 L412.0 230.0 L410.0 239.0 L406.0 247.0 L399.0 252.0 L392.0 255.0 L390.0 266.0 L389.0 277.0 L375.0 278.0 L360.8 277.0 L366.0 294.0 L369.0 311.0 L363.0 322.0 L358.0 333.7 L365.0 345.0 L372.0 356.4 L385.0 365.0 L397.7 373.5 L404.0 386.0 L409.0 399.0 L411.0 412.0 L412.0 424.5 L410.0 439.0 L406.0 453.0 L389.0 458.6 L380.0 470.0 L230.0 470.0Z" fill="#eaf0dc"/>
<g fill="#c4deb0" filter="url(#mot)"><ellipse cx="300" cy="140" rx="75" ry="70" transform="rotate(0 300 140)" opacity="1"/><ellipse cx="290" cy="250" rx="65" ry="55" transform="rotate(0 290 250)" opacity="0.95"/><ellipse cx="365" cy="225" rx="38" ry="60" transform="rotate(15 365 225)" opacity="1"/><ellipse cx="330" cy="320" rx="55" ry="35" transform="rotate(0 330 320)" opacity="0.9"/><ellipse cx="300" cy="100" rx="70" ry="30" transform="rotate(0 300 100)" opacity="1"/><ellipse cx="385" cy="420" rx="28" ry="48" transform="rotate(0 385 420)" opacity="0.9"/><ellipse cx="345" cy="395" rx="32" ry="28" transform="rotate(0 345 395)" opacity="0.75"/><ellipse cx="262" cy="455" rx="32" ry="16" transform="rotate(0 262 455)" opacity="0.6"/><ellipse cx="383" cy="165" rx="20" ry="50" transform="rotate(8 383 165)" opacity="1"/><ellipse cx="250" cy="175" rx="22" ry="55" transform="rotate(0 250 175)" opacity="0.8"/><ellipse cx="250" cy="300" rx="25" ry="40" transform="rotate(0 250 300)" opacity="0.7"/><ellipse cx="300" cy="440" rx="30" ry="20" transform="rotate(0 300 440)" opacity="0.5"/><ellipse cx="560" cy="120" rx="120" ry="25" transform="rotate(0 560 120)" opacity="0.2"/><ellipse cx="440" cy="110" rx="40" ry="20" transform="rotate(0 440 110)" opacity="0.25"/><ellipse cx="880" cy="120" rx="40" ry="30" transform="rotate(0 880 120)" opacity="0.15"/><ellipse cx="770" cy="165" rx="55" ry="35" transform="rotate(0 770 165)" opacity="0.45"/><ellipse cx="700" cy="200" rx="30" ry="20" transform="rotate(0 700 200)" opacity="0.3"/><ellipse cx="520" cy="280" rx="70" ry="28" transform="rotate(8 520 280)" opacity="0.7"/><ellipse cx="700" cy="270" rx="60" ry="20" transform="rotate(0 700 270)" opacity="0.5"/><ellipse cx="800" cy="262" rx="60" ry="25" transform="rotate(5 800 262)" opacity="0.7"/><ellipse cx="460" cy="345" rx="40" ry="35" transform="rotate(0 460 345)" opacity="0.6"/><ellipse cx="560" cy="458" rx="85" ry="16" transform="rotate(5 560 458)" opacity="0.9"/><ellipse cx="440" cy="430" rx="25" ry="25" transform="rotate(0 440 430)" opacity="0.35"/><ellipse cx="500" cy="400" rx="40" ry="25" transform="rotate(0 500 400)" opacity="0.35"/><ellipse cx="665" cy="462" rx="45" ry="10" transform="rotate(0 665 462)" opacity="0.8"/><ellipse cx="800" cy="420" rx="50" ry="30" transform="rotate(0 800 420)" opacity="0.45"/><ellipse cx="730" cy="440" rx="40" ry="20" transform="rotate(0 730 440)" opacity="0.3"/><ellipse cx="600" cy="310" rx="50" ry="15" transform="rotate(0 600 310)" opacity="0.5"/></g>
<g fill="#c0dcab" filter="url(#rough)"><ellipse cx="392" cy="232" rx="14" ry="30" transform="rotate(-25 392 232)"/><ellipse cx="415" cy="262" rx="18" ry="10" transform="rotate(20 415 262)"/><ellipse cx="490" cy="262" rx="24" ry="12" transform="rotate(15 490 262)"/><ellipse cx="535" cy="280" rx="34" ry="14" transform="rotate(10 535 280)"/><ellipse cx="565" cy="292" rx="16" ry="10" transform="rotate(0 565 292)"/><ellipse cx="600" cy="312" rx="22" ry="9" transform="rotate(10 600 312)"/><ellipse cx="618" cy="272" rx="20" ry="7" transform="rotate(0 618 272)"/><ellipse cx="680" cy="280" rx="22" ry="9" transform="rotate(0 680 280)"/><ellipse cx="655" cy="268" rx="14" ry="6" transform="rotate(0 655 268)"/><ellipse cx="436" cy="305" rx="9" ry="7" transform="rotate(0 436 305)"/><ellipse cx="452" cy="328" rx="22" ry="16" transform="rotate(30 452 328)"/><ellipse cx="470" cy="350" rx="12" ry="12" transform="rotate(0 470 350)"/><ellipse cx="520" cy="318" rx="26" ry="9" transform="rotate(-10 520 318)"/><ellipse cx="505" cy="400" rx="13" ry="8" transform="rotate(-30 505 400)"/><ellipse cx="470" cy="412" rx="9" ry="7" transform="rotate(0 470 412)"/><ellipse cx="452" cy="372" rx="8" ry="12" transform="rotate(0 452 372)"/><ellipse cx="566" cy="418" rx="6" ry="5" transform="rotate(0 566 418)"/><ellipse cx="765" cy="255" rx="22" ry="9" transform="rotate(-5 765 255)"/><ellipse cx="805" cy="258" rx="24" ry="12" transform="rotate(5 805 258)"/><ellipse cx="840" cy="266" rx="16" ry="12" transform="rotate(0 840 266)"/><ellipse cx="790" cy="275" rx="14" ry="6" transform="rotate(0 790 275)"/><path d="M772 338L790 330L815 328L835 322L843 332L852 345L862 362L868 374L852 374L840 378L828 383L815 374L803 364L790 364L778 360L770 350Z"/><ellipse cx="856" cy="420" rx="16" ry="10" transform="rotate(30 856 420)"/><ellipse cx="872" cy="436" rx="10" ry="8" transform="rotate(0 872 436)"/><ellipse cx="915" cy="470" rx="25" ry="12" transform="rotate(0 915 470)"/><ellipse cx="300" cy="135" rx="16" ry="12" transform="rotate(0 300 135)"/><ellipse cx="345" cy="185" rx="12" ry="18" transform="rotate(10 345 185)"/><ellipse cx="275" cy="238" rx="14" ry="9" transform="rotate(0 275 238)"/><ellipse cx="352" cy="268" rx="12" ry="9" transform="rotate(0 352 268)"/><ellipse cx="392" cy="410" rx="9" ry="22" transform="rotate(5 392 410)"/></g>
<path d="M930.5 80.0 L930.5 88.0 L928.0 100.0 L926.3 116.4 L922.0 130.0 L920.6 144.7 L922.5 160.0 L923.4 173.0 L922.0 181.0 L920.6 187.3 L916.0 197.0 L910.7 204.3 L905.0 201.0 L899.3 200.0 L890.0 201.0 L879.5 204.3 L874.0 209.0 L871.0 212.8 L866.0 217.0 L862.5 221.3 L860.0 232.0 L859.6 244.0 L858.5 260.0 L858.2 277.0 L854.0 285.5 L846.0 290.0 L837.0 297.0 L833.0 308.0 L834.0 319.6 L841.0 329.0 L848.3 339.4 L857.0 352.0 L865.3 365.0 L870.0 372.0 L872.4 379.0 L868.0 386.0 L866.7 393.3 L871.0 404.0 L876.6 413.2 L878.5 422.0 L879.5 430.0 L888.0 437.0 L899.3 441.5 L912.0 447.0 L924.9 453.0 L945.0 460.0 L964.6 466.0 L975.0 472.0 L1040.0 472.0 L1040.0 80.0Z" fill="#aad3df"/>
<g fill="none" stroke="#c2a3c4" stroke-width="1" stroke-linejoin="round" opacity=".9"><path d="M406.0 144.7 C406.7 147.2 410.3 154.9 410.0 160.0 C409.7 165.1 406.0 170.8 404.0 175.0 C402.0 179.2 400.5 180.2 398.0 185.0 C395.5 189.8 390.5 200.8 389.0 204.0"/><path d="M434.6 147.6 C435.2 150.5 438.8 159.6 438.0 165.0 C437.2 170.4 429.7 175.0 430.0 180.0 C430.3 185.0 436.7 190.8 440.0 195.0 C443.3 199.2 449.0 201.2 450.0 205.0 C451.0 208.8 448.3 213.5 446.0 218.0 C443.7 222.5 441.7 230.0 436.0 232.0 C430.3 234.0 416.0 230.3 412.0 230.0"/><path d="M477.0 150.4 C476.2 153.7 471.5 164.2 472.0 170.0 C472.5 175.8 475.8 181.7 480.0 185.0 C484.2 188.3 494.5 185.8 497.0 190.0 C499.5 194.2 494.5 204.2 495.0 210.0 C495.5 215.8 501.2 220.0 500.0 225.0 C498.8 230.0 493.0 236.7 488.0 240.0 C483.0 243.3 475.5 245.0 470.0 245.0 C464.5 245.0 460.7 242.2 455.0 240.0 C449.3 237.8 439.2 233.3 436.0 232.0"/><path d="M488.0 240.0 C488.7 242.5 492.8 250.3 492.0 255.0 C491.2 259.7 487.5 265.2 483.0 268.0 C478.5 270.8 470.5 272.0 465.0 272.0 C459.5 272.0 455.8 268.0 450.0 268.0 C444.2 268.0 436.3 273.0 430.0 272.0 C423.7 271.0 416.0 266.2 412.0 262.0 C408.0 257.8 407.0 249.5 406.0 247.0"/><path d="M497.0 190.0 C500.8 189.3 512.0 187.3 520.0 186.0 C528.0 184.7 537.5 183.8 545.0 182.0 C552.5 180.2 556.7 178.3 565.0 175.0 C573.3 171.7 589.7 164.4 594.6 162.3"/><path d="M500.0 225.0 C503.3 224.5 512.5 221.8 520.0 222.0 C527.5 222.2 537.5 226.0 545.0 226.0 C552.5 226.0 558.3 223.8 565.0 222.0 C571.7 220.2 580.2 218.7 585.0 215.0 C589.8 211.3 591.5 205.0 594.0 200.0 C596.5 195.0 598.2 190.7 600.0 185.0 C601.8 179.3 604.2 169.2 605.0 166.0"/><path d="M585.0 215.0 C586.2 217.5 591.5 224.2 592.0 230.0 C592.5 235.8 587.3 244.7 588.0 250.0 C588.7 255.3 595.7 257.8 596.0 262.0 C596.3 266.2 596.0 272.0 590.0 275.0 C584.0 278.0 570.0 279.8 560.0 280.0 C550.0 280.2 538.3 276.0 530.0 276.0 C521.7 276.0 516.3 280.7 510.0 280.0 C503.7 279.3 495.0 273.3 492.0 272.0"/><path d="M654.0 166.0 C653.3 168.3 652.3 176.0 650.0 180.0 C647.7 184.0 640.8 185.8 640.0 190.0 C639.2 194.2 641.7 201.3 645.0 205.0 C648.3 208.7 654.2 211.5 660.0 212.0 C665.8 212.5 673.3 209.2 680.0 208.0 C686.7 206.8 696.0 208.0 700.0 205.0 C704.0 202.0 702.0 194.5 704.0 190.0 C706.0 185.5 711.8 183.0 712.0 178.0 C712.2 173.0 704.2 169.3 705.0 160.0 C705.8 150.7 714.7 128.3 716.6 122.0"/><path d="M596.0 262.0 C599.2 261.3 610.2 256.7 615.0 258.0 C619.8 259.3 620.8 267.0 625.0 270.0 C629.2 273.0 634.2 275.7 640.0 276.0 C645.8 276.3 653.3 272.0 660.0 272.0 C666.7 272.0 675.0 277.7 680.0 276.0 C685.0 274.3 686.7 266.3 690.0 262.0 C693.3 257.7 699.2 254.5 700.0 250.0 C700.8 245.5 695.0 240.0 695.0 235.0 C695.0 230.0 699.2 225.0 700.0 220.0 C700.8 215.0 700.0 207.5 700.0 205.0"/><path d="M712.0 178.0 C715.0 176.7 724.5 173.0 730.0 170.0 C735.5 167.0 740.0 160.8 745.0 160.0 C750.0 159.2 755.0 165.3 760.0 165.0 C765.0 164.7 770.0 158.0 775.0 158.0 C780.0 158.0 785.8 165.5 790.0 165.0 C794.2 164.5 796.3 158.3 800.0 155.0 C803.7 151.7 808.5 151.2 812.0 145.0 C815.5 138.8 819.5 122.5 821.0 118.0"/><path d="M700.0 220.0 C702.5 219.2 710.8 217.5 715.0 215.0 C719.2 212.5 720.0 207.2 725.0 205.0 C730.0 202.8 739.2 201.5 745.0 202.0 C750.8 202.5 756.7 209.2 760.0 208.0 C763.3 206.8 761.7 198.0 765.0 195.0 C768.3 192.0 775.8 192.5 780.0 190.0 C784.2 187.5 788.3 184.2 790.0 180.0 C791.7 175.8 790.0 167.5 790.0 165.0"/><path d="M765.0 195.0 C770.8 195.8 793.3 196.7 800.0 200.0 C806.7 203.3 805.0 210.0 805.0 215.0 C805.0 220.0 799.2 225.0 800.0 230.0 C800.8 235.0 805.0 241.7 810.0 245.0 C815.0 248.3 824.2 250.0 830.0 250.0 C835.8 250.0 840.3 245.0 845.0 245.0 C849.7 245.0 855.8 249.2 858.0 250.0"/><path d="M812.0 145.0 C814.2 147.5 823.7 154.2 825.0 160.0 C826.3 165.8 819.2 174.2 820.0 180.0 C820.8 185.8 825.8 190.8 830.0 195.0 C834.2 199.2 840.0 203.3 845.0 205.0 C850.0 206.7 855.7 203.7 860.0 205.0 C864.3 206.3 869.2 211.5 871.0 212.8"/><path d="M700.0 250.0 C703.3 250.8 712.5 255.0 720.0 255.0 C727.5 255.0 738.3 249.5 745.0 250.0 C751.7 250.5 753.3 257.2 760.0 258.0 C766.7 258.8 778.3 254.3 785.0 255.0 C791.7 255.7 795.8 263.7 800.0 262.0 C804.2 260.3 808.3 247.8 810.0 245.0"/><path d="M690.0 262.0 C691.7 265.0 695.0 276.2 700.0 280.0 C705.0 283.8 713.3 284.7 720.0 285.0 C726.7 285.3 733.3 281.2 740.0 282.0 C746.7 282.8 754.2 287.0 760.0 290.0 C765.8 293.0 770.0 299.0 775.0 300.0 C780.0 301.0 785.8 302.3 790.0 296.0 C794.2 289.7 798.3 267.7 800.0 262.0"/><path d="M640.0 276.0 C640.3 279.2 638.7 291.0 642.0 295.0 C645.3 299.0 653.7 298.3 660.0 300.0 C666.3 301.7 673.3 305.0 680.0 305.0 C686.7 305.0 693.3 303.3 700.0 300.0 C706.7 296.7 716.7 287.5 720.0 285.0"/><path d="M680.0 305.0 C681.7 307.8 685.0 317.8 690.0 322.0 C695.0 326.2 707.5 326.2 710.0 330.0 C712.5 333.8 703.3 340.8 705.0 345.0 C706.7 349.2 713.3 354.2 720.0 355.0 C726.7 355.8 738.3 349.2 745.0 350.0 C751.7 350.8 756.5 355.6 760.0 360.0 C763.5 364.4 765.0 373.6 766.0 376.3"/><path d="M745.0 350.0 C746.7 347.5 750.8 339.2 755.0 335.0 C759.2 330.8 766.7 330.8 770.0 325.0 C773.3 319.2 774.2 304.2 775.0 300.0"/><path d="M590.0 275.0 C591.7 278.3 595.8 290.8 600.0 295.0 C604.2 299.2 608.0 300.0 615.0 300.0 C622.0 300.0 637.5 295.8 642.0 295.0"/><path d="M600.0 295.0 C599.2 298.3 594.2 309.2 595.0 315.0 C595.8 320.8 600.0 326.7 605.0 330.0 C610.0 333.3 619.2 332.5 625.0 335.0 C630.8 337.5 634.2 344.2 640.0 345.0 C645.8 345.8 653.3 340.0 660.0 340.0 C666.7 340.0 672.5 344.2 680.0 345.0 C687.5 345.8 700.8 345.0 705.0 345.0"/><path d="M605.0 330.0 C602.5 330.8 595.0 335.0 590.0 335.0 C585.0 335.0 580.0 330.0 575.0 330.0 C570.0 330.0 565.0 335.3 560.0 335.0 C555.0 334.7 550.0 328.5 545.0 328.0 C540.0 327.5 535.0 332.5 530.0 332.0 C525.0 331.5 518.3 333.7 515.0 325.0 C511.7 316.3 510.8 287.5 510.0 280.0"/><path d="M515.0 325.0 C512.5 326.7 504.2 330.8 500.0 335.0 C495.8 339.2 490.8 344.2 490.0 350.0 C489.2 355.8 492.5 364.2 495.0 370.0 C497.5 375.8 504.2 380.0 505.0 385.0 C505.8 390.0 499.2 395.0 500.0 400.0 C500.8 405.0 505.2 410.5 510.0 415.0 C514.8 419.5 525.8 425.0 529.0 427.0"/><path d="M560.0 335.0 C559.2 338.3 557.5 349.2 555.0 355.0 C552.5 360.8 545.8 365.0 545.0 370.0 C544.2 375.0 545.8 381.3 550.0 385.0 C554.2 388.7 564.2 389.5 570.0 392.0 C575.8 394.5 581.7 396.2 585.0 400.0 C588.3 403.8 586.7 411.7 590.0 415.0 C593.3 418.3 600.9 412.7 605.0 420.0 C609.1 427.3 612.9 452.2 614.5 458.6"/><path d="M605.0 420.0 C607.5 417.5 615.0 408.3 620.0 405.0 C625.0 401.7 630.0 400.0 635.0 400.0 C640.0 400.0 645.0 405.0 650.0 405.0 C655.0 405.0 660.8 399.2 665.0 400.0 C669.2 400.8 670.2 407.8 675.0 410.0 C679.8 412.2 690.8 412.5 694.0 413.0"/><path d="M640.0 345.0 C639.2 347.5 637.5 355.0 635.0 360.0 C632.5 365.0 625.8 370.0 625.0 375.0 C624.2 380.0 628.3 385.8 630.0 390.0 C631.7 394.2 634.2 398.3 635.0 400.0"/><path d="M492.0 272.0 C490.8 275.0 488.7 285.3 485.0 290.0 C481.3 294.7 473.3 295.8 470.0 300.0 C466.7 304.2 468.3 311.7 465.0 315.0 C461.7 318.3 454.2 320.5 450.0 320.0 C445.8 319.5 444.2 312.8 440.0 312.0 C435.8 311.2 429.2 316.2 425.0 315.0 C420.8 313.8 419.2 305.8 415.0 305.0 C410.8 304.2 407.7 309.0 400.0 310.0 C392.3 311.0 374.2 310.8 369.0 311.0"/><path d="M465.0 315.0 C465.8 317.5 470.8 325.0 470.0 330.0 C469.2 335.0 460.0 340.0 460.0 345.0 C460.0 350.0 465.0 359.2 470.0 360.0 C475.0 360.8 486.7 351.7 490.0 350.0"/><path d="M460.0 345.0 C456.7 345.8 446.7 350.0 440.0 350.0 C433.3 350.0 425.0 344.2 420.0 345.0 C415.0 345.8 413.7 350.2 410.0 355.0 C406.3 359.8 399.8 370.4 397.7 373.5"/><path d="M425.0 275.0 C426.7 277.5 430.0 286.7 435.0 290.0 C440.0 293.3 449.2 293.3 455.0 295.0 C460.8 296.7 467.5 299.2 470.0 300.0"/><path d="M457.0 84.0 C457.8 86.7 462.3 94.0 462.0 100.0 C461.7 106.0 455.3 114.2 455.0 120.0 C454.7 125.8 459.7 131.1 460.0 135.0 C460.3 138.9 457.5 141.9 457.0 143.3"/><path d="M520.0 84.0 C520.8 86.7 525.3 94.0 525.0 100.0 C524.7 106.0 518.5 113.3 518.0 120.0 C517.5 126.7 520.1 132.9 522.0 140.0 C523.9 147.1 528.2 158.6 529.4 162.3"/><path d="M650.0 84.0 C649.2 86.7 644.7 94.0 645.0 100.0 C645.3 106.0 651.5 113.3 652.0 120.0 C652.5 126.7 647.7 132.3 648.0 140.0 C648.3 147.7 653.0 161.7 654.0 166.0"/><path d="M720.0 84.0 C719.2 86.7 715.6 93.7 715.0 100.0 C714.4 106.3 716.3 118.3 716.6 122.0"/><path d="M770.0 84.0 C771.7 85.8 775.5 91.2 780.0 95.0 C784.5 98.8 794.2 105.0 797.0 107.0"/><path d="M850.0 84.0 C849.2 86.7 844.7 94.8 845.0 100.0 C845.3 105.2 852.0 110.5 852.0 115.0 C852.0 119.5 846.2 125.0 845.0 127.0"/><path d="M766.0 376.3 C767.5 379.4 774.3 388.6 775.0 395.0 C775.7 401.4 769.2 408.3 770.0 415.0 C770.8 421.7 779.2 426.5 780.0 435.0 C780.8 443.5 775.8 460.8 775.0 466.0"/><path d="M860.0 395.0 C858.3 397.5 850.8 405.0 850.0 410.0 C849.2 415.0 856.7 420.0 855.0 425.0 C853.3 430.0 841.7 433.2 840.0 440.0 C838.3 446.8 844.2 461.7 845.0 466.0"/><path d="M358.0 125.0 C355.0 125.8 345.5 130.0 340.0 130.0 C334.5 130.0 330.0 124.2 325.0 125.0 C320.0 125.8 315.0 134.2 310.0 135.0 C305.0 135.8 300.0 129.2 295.0 130.0 C290.0 130.8 285.5 139.2 280.0 140.0 C274.5 140.8 269.3 135.0 262.0 135.0 C254.7 135.0 240.3 139.2 236.0 140.0"/><path d="M366.5 173.0 C363.8 174.2 355.2 176.3 350.0 180.0 C344.8 183.7 340.0 193.0 335.0 195.0 C330.0 197.0 325.8 191.2 320.0 192.0 C314.2 192.8 305.8 199.5 300.0 200.0 C294.2 200.5 290.0 194.2 285.0 195.0 C280.0 195.8 275.8 204.2 270.0 205.0 C264.2 205.8 255.7 200.0 250.0 200.0 C244.3 200.0 238.3 204.2 236.0 205.0"/><path d="M389.0 204.0 C385.8 205.0 375.7 206.5 370.0 210.0 C364.3 213.5 360.0 223.0 355.0 225.0 C350.0 227.0 345.0 220.3 340.0 222.0 C335.0 223.7 326.7 230.3 325.0 235.0 C323.3 239.7 330.8 245.5 330.0 250.0 C329.2 254.5 325.0 259.0 320.0 262.0 C315.0 265.0 304.7 266.7 300.0 268.0 C295.3 269.3 293.3 269.7 292.0 270.0"/><path d="M372.0 356.4 C369.2 355.7 360.3 351.4 355.0 352.0 C349.7 352.6 345.0 359.5 340.0 360.0 C335.0 360.5 330.0 354.7 325.0 355.0 C320.0 355.3 314.2 362.0 310.0 362.0 C305.8 362.0 301.7 360.3 300.0 355.0 C298.3 349.7 300.0 334.2 300.0 330.0"/><path d="M340.0 360.0 C340.8 363.3 345.8 374.2 345.0 380.0 C344.2 385.8 335.0 390.0 335.0 395.0 C335.0 400.0 344.2 404.2 345.0 410.0 C345.8 415.8 339.2 424.2 340.0 430.0 C340.8 435.8 349.2 439.0 350.0 445.0 C350.8 451.0 345.8 462.5 345.0 466.0"/><path d="M409.0 399.0 C406.7 400.0 399.0 405.2 395.0 405.0 C391.0 404.8 389.2 398.0 385.0 398.0 C380.8 398.0 374.2 404.7 370.0 405.0 C365.8 405.3 364.2 399.2 360.0 400.0 C355.8 400.8 347.5 408.3 345.0 410.0"/></g>
<g fill="none" stroke="#e58a9a" stroke-width="1" stroke-linejoin="round" opacity=".85"><path d="M236.0 100.0 C238.3 102.5 245.7 108.3 250.0 115.0 C254.3 121.7 257.8 132.5 262.0 140.0 C266.2 147.5 270.3 153.3 275.0 160.0 C279.7 166.7 285.0 173.7 290.0 180.0 C295.0 186.3 301.3 192.8 305.0 198.0 C308.7 203.2 310.8 208.8 312.0 211.0"/><path d="M312.0 211.0 C315.0 212.0 323.7 215.2 330.0 217.0 C336.3 218.8 342.5 219.5 350.0 222.0 C357.5 224.5 368.0 227.3 375.0 232.0 C382.0 236.7 387.0 244.5 392.0 250.0 C397.0 255.5 399.5 260.0 405.0 265.0 C410.5 270.0 419.0 276.2 425.0 280.0 C431.0 283.8 438.3 286.7 441.0 288.0"/><path d="M312.0 211.0 C313.0 214.5 316.3 225.3 318.0 232.0 C319.7 238.7 322.0 243.8 322.0 251.0 C322.0 258.2 319.7 265.8 318.0 275.0 C316.3 284.2 315.0 296.8 312.0 306.0 C309.0 315.2 302.7 322.7 300.0 330.0 C297.3 337.3 296.0 343.3 296.0 350.0 C296.0 356.7 296.0 362.5 300.0 370.0 C304.0 377.5 312.5 385.0 320.0 395.0 C327.5 405.0 338.3 418.2 345.0 430.0 C351.7 441.8 357.5 460.0 360.0 466.0"/><path d="M270.0 364.0 C273.3 365.3 283.3 368.5 290.0 372.0 C296.7 375.5 303.3 380.3 310.0 385.0 C316.7 389.7 324.2 398.2 330.0 400.0 C335.8 401.8 342.5 396.7 345.0 396.0"/><path d="M441.0 288.0 C445.8 290.8 460.2 298.0 470.0 305.0 C479.8 312.0 489.5 322.3 500.0 330.0 C510.5 337.7 521.3 346.5 533.0 351.0 C544.7 355.5 558.8 356.8 570.0 357.0 C581.2 357.2 590.8 354.8 600.0 352.0 C609.2 349.2 616.7 344.5 625.0 340.0 C633.3 335.5 640.8 329.2 650.0 325.0 C659.2 320.8 670.0 318.3 680.0 315.0 C690.0 311.7 701.3 305.0 710.0 305.0 C718.7 305.0 722.0 314.2 732.0 315.0 C742.0 315.8 758.7 311.2 770.0 310.0 C781.3 308.8 792.0 308.0 800.0 308.0 C808.0 308.0 815.0 309.7 818.0 310.0"/><path d="M600.0 352.0 C603.3 354.2 612.5 359.8 620.0 365.0 C627.5 370.2 636.7 378.8 645.0 383.0 C653.3 387.2 660.8 387.2 670.0 390.0 C679.2 392.8 691.7 396.3 700.0 400.0 C708.3 403.7 714.0 409.5 720.0 412.0 C726.0 414.5 733.3 414.5 736.0 415.0"/><path d="M441.0 288.0 C440.0 293.3 437.7 309.7 435.0 320.0 C432.3 330.3 427.5 341.0 425.0 350.0 C422.5 359.0 419.5 364.0 420.0 374.0 C420.5 384.0 426.0 397.7 428.0 410.0 C430.0 422.3 430.7 438.7 432.0 448.0 C433.3 457.3 435.3 463.0 436.0 466.0"/><path d="M681.0 146.0 C681.5 141.7 682.5 127.7 684.0 120.0 C685.5 112.3 687.3 105.3 690.0 100.0 C692.7 94.7 698.3 90.0 700.0 88.0"/><path d="M797.0 199.0 C800.8 199.7 812.8 201.2 820.0 203.0 C827.2 204.8 833.7 206.8 840.0 210.0 C846.3 213.2 855.0 220.0 858.0 222.0"/><path d="M736.0 415.0 C741.7 417.5 759.3 425.0 770.0 430.0 C780.7 435.0 788.3 439.0 800.0 445.0 C811.7 451.0 833.3 462.5 840.0 466.0"/><path d="M893.0 88.0 C895.0 90.0 901.2 97.3 905.0 100.0 C908.8 102.7 913.3 102.0 916.0 104.0 C918.7 106.0 920.5 108.0 921.0 112.0 C921.5 116.0 919.2 122.0 919.0 128.0 C918.8 134.0 919.8 144.7 920.0 148.0"/><path d="M905.0 100.0 L925.0 98.0"/><path d="M500.0 275.0 C502.5 273.8 510.0 269.5 515.0 268.0 C520.0 266.5 527.5 266.3 530.0 266.0"/><path d="M796.0 407.0 C796.7 410.8 801.0 420.2 800.0 430.0 C799.0 439.8 791.7 460.0 790.0 466.0"/></g>
<g fill="none" stroke="#f2a878" stroke-width=".9" stroke-linejoin="round" opacity=".85"><path d="M736.0 415.0 C737.5 417.5 742.7 425.0 745.0 430.0 C747.3 435.0 749.5 439.0 750.0 445.0 C750.5 451.0 748.3 462.5 748.0 466.0"/><path d="M736.0 415.0 C740.0 416.7 751.0 420.8 760.0 425.0 C769.0 429.2 780.8 435.0 790.0 440.0 C799.2 445.0 808.3 450.7 815.0 455.0 C821.7 459.3 827.5 464.2 830.0 466.0"/><path d="M797.0 407.0 C795.8 409.2 793.7 414.5 790.0 420.0 C786.3 425.5 778.3 432.3 775.0 440.0 C771.7 447.7 770.8 461.7 770.0 466.0"/><path d="M797.0 407.0 C800.0 407.8 809.5 409.8 815.0 412.0 C820.5 414.2 827.5 418.7 830.0 420.0"/><path d="M700.0 440.0 C702.5 441.7 710.8 445.7 715.0 450.0 C719.2 454.3 723.3 463.3 725.0 466.0"/><path d="M760.0 440.0 C763.3 441.7 773.3 445.7 780.0 450.0 C786.7 454.3 796.7 463.3 800.0 466.0"/><path d="M690.0 88.0 C689.0 90.8 685.5 99.7 684.0 105.0 C682.5 110.3 681.5 117.5 681.0 120.0"/><path d="M640.0 88.0 C642.5 90.0 650.0 96.3 655.0 100.0 C660.0 103.7 665.2 106.7 670.0 110.0 C674.8 113.3 681.7 118.3 684.0 120.0"/><path d="M420.0 100.0 C423.3 101.3 433.3 107.3 440.0 108.0 C446.7 108.7 453.3 103.3 460.0 104.0 C466.7 104.7 476.7 110.7 480.0 112.0"/><path d="M236.0 330.0 C238.3 332.5 245.7 340.0 250.0 345.0 C254.3 350.0 258.7 354.8 262.0 360.0 C265.3 365.2 268.7 373.3 270.0 376.0"/><path d="M236.0 400.0 C238.3 399.2 245.7 397.5 250.0 395.0 C254.3 392.5 258.7 388.2 262.0 385.0 C265.3 381.8 268.7 377.5 270.0 376.0"/><path d="M270.0 376.0 C271.7 379.2 277.5 387.7 280.0 395.0 C282.5 402.3 282.5 411.7 285.0 420.0 C287.5 428.3 292.5 437.3 295.0 445.0 C297.5 452.7 299.2 462.5 300.0 466.0"/></g>
<path d="M540.0 84.0 C541.0 86.7 543.3 94.2 546.0 100.0 C548.7 105.8 553.2 113.2 556.0 119.0 C558.8 124.8 560.7 129.8 563.0 135.0 C565.3 140.2 568.5 145.3 570.0 150.0 C571.5 154.7 571.7 160.8 572.0 163.0" fill="none" stroke="#aad3df" stroke-width="1.3"/>
<path d="M378.0 84.0 C378.3 85.8 379.1 92.0 380.0 95.0 C380.9 98.0 381.0 100.2 383.5 102.0 C386.0 103.8 391.2 104.5 395.0 106.0 C398.8 107.5 402.7 109.5 406.0 110.7 C409.3 111.9 413.1 111.8 415.0 113.0 C416.9 114.2 417.8 116.1 417.6 117.8 C417.4 119.5 415.9 121.8 414.0 123.0 C412.1 124.2 408.7 123.8 406.0 125.0 C403.3 126.2 399.8 128.2 398.0 130.0 C396.2 131.8 395.0 134.2 395.0 136.0 C395.0 137.8 396.2 139.6 398.0 141.0 C399.8 142.4 402.3 143.7 406.0 144.7 C409.7 145.7 415.2 146.5 420.0 147.0 C424.8 147.5 430.3 147.9 434.6 147.6 C438.9 147.3 442.3 145.7 446.0 145.0 C449.7 144.3 453.5 143.1 457.0 143.3 C460.5 143.5 463.7 144.8 467.0 146.0 C470.3 147.2 473.3 149.1 477.0 150.4 C480.7 151.7 485.0 153.1 489.0 154.0 C493.0 154.9 496.7 155.0 501.0 156.0 C505.3 157.0 510.3 158.9 515.0 160.0 C519.7 161.1 525.1 162.5 529.4 162.3 C533.7 162.1 537.2 160.1 541.0 159.0 C544.8 157.9 548.5 155.8 552.0 156.0 C555.5 156.2 558.7 158.8 562.0 160.0 C565.3 161.2 568.5 162.5 572.0 163.0 C575.5 163.5 579.2 163.1 583.0 163.0 C586.8 162.9 590.9 161.8 594.6 162.3 C598.3 162.8 601.7 164.7 605.0 166.0 C608.3 167.3 611.5 169.2 614.5 170.3 C617.5 171.4 620.2 172.1 623.0 172.5 C625.8 172.9 628.2 173.4 631.5 173.0 C634.8 172.6 639.2 171.2 643.0 170.0 C646.8 168.8 650.7 167.5 654.0 166.0 C657.3 164.5 660.2 162.7 663.0 161.0 C665.8 159.3 667.7 158.8 671.0 156.0 C674.3 153.2 679.2 147.8 683.0 144.0 C686.8 140.2 690.3 136.2 694.0 133.4 C697.7 130.6 701.2 128.9 705.0 127.0 C708.8 125.1 712.6 123.2 716.6 122.0 C720.6 120.8 724.8 120.2 729.0 119.5 C733.2 118.8 737.8 118.6 742.0 117.8 C746.2 117.0 750.0 115.7 754.0 114.5 C758.0 113.3 761.7 111.8 766.0 110.7 C770.3 109.6 774.8 108.6 780.0 108.0 C785.2 107.4 792.0 106.2 797.0 107.0 C802.0 107.8 806.0 111.2 810.0 113.0 C814.0 114.8 819.2 117.2 821.0 118.0" fill="none" stroke="#9d95b0" stroke-width="3.2" stroke-linejoin="round" opacity=".75"/>
<g fill="none" stroke="#a99bb6" stroke-width="2.4" stroke-linejoin="round" stroke-linecap="round" opacity=".72"><path d="M821.0 118.0 C822.8 118.5 829.5 119.3 832.0 121.0 C834.5 122.7 833.8 127.0 836.0 128.0 C838.2 129.0 842.3 126.2 845.0 127.0 C847.7 127.8 849.2 131.5 852.0 133.0 C854.8 134.5 859.3 133.8 862.0 136.0 C864.7 138.2 865.0 143.3 868.0 146.0 C871.0 148.7 875.8 150.3 880.0 152.0 C884.2 153.7 888.8 155.2 893.0 156.0 C897.2 156.8 900.3 156.8 905.0 157.0 C909.7 157.2 918.3 157.0 921.0 157.0"/><path d="M378.0 96.5 C377.7 98.4 376.0 104.8 376.0 108.0 C376.0 111.2 379.3 114.0 378.0 116.0 C376.7 118.0 371.3 118.5 368.0 120.0 C364.7 121.5 360.2 122.2 358.0 125.0 C355.8 127.8 355.5 132.8 355.0 137.0 C354.5 141.2 354.2 145.8 355.0 150.0 C355.8 154.2 358.1 158.2 360.0 162.0 C361.9 165.8 365.3 169.5 366.5 173.0 C367.7 176.5 366.6 179.7 367.0 183.0 C367.4 186.3 367.0 190.3 369.0 193.0 C371.0 195.7 375.7 197.2 379.0 199.0 C382.3 200.8 385.8 201.5 389.0 204.0 C392.2 206.5 395.2 210.7 398.0 214.0 C400.8 217.3 403.7 221.3 406.0 224.0 C408.3 226.7 411.3 227.5 412.0 230.0 C412.7 232.5 411.0 236.2 410.0 239.0 C409.0 241.8 407.8 244.8 406.0 247.0 C404.2 249.2 401.3 250.7 399.0 252.0 C396.7 253.3 393.5 252.7 392.0 255.0 C390.5 257.3 390.5 262.3 390.0 266.0 C389.5 269.7 391.5 275.0 389.0 277.0 C386.5 279.0 379.7 278.0 375.0 278.0 C370.3 278.0 362.3 274.3 360.8 277.0 C359.3 279.7 364.6 288.3 366.0 294.0 C367.4 299.7 369.5 306.3 369.0 311.0 C368.5 315.7 364.8 318.2 363.0 322.0 C361.2 325.8 357.7 329.9 358.0 333.7 C358.3 337.5 362.7 341.2 365.0 345.0 C367.3 348.8 368.7 353.1 372.0 356.4 C375.3 359.7 380.7 362.1 385.0 365.0 C389.3 367.9 394.5 370.0 397.7 373.5 C400.9 377.0 402.1 381.8 404.0 386.0 C405.9 390.2 407.8 394.7 409.0 399.0 C410.2 403.3 410.5 407.8 411.0 412.0 C411.5 416.2 412.2 420.0 412.0 424.5 C411.8 429.0 411.0 434.2 410.0 439.0 C409.0 443.8 406.7 450.7 406.0 453.0"/><path d="M389.0 458.6 C391.8 457.7 400.8 453.5 406.0 453.0 C411.2 452.5 415.2 455.1 420.0 455.5 C424.8 455.9 429.8 456.1 434.6 455.7 C439.4 455.3 444.3 453.9 449.0 453.0 C453.7 452.1 457.5 451.5 463.0 450.0 C468.5 448.5 475.7 445.9 482.0 444.0 C488.3 442.1 495.5 440.7 501.0 438.7 C506.5 436.7 510.3 433.9 515.0 432.0 C519.7 430.1 524.7 427.8 529.0 427.0 C533.3 426.2 537.2 427.0 541.0 427.5 C544.8 428.0 549.2 428.6 552.0 430.0 C554.8 431.4 556.1 434.1 558.0 436.0 C559.9 437.9 559.9 439.8 563.4 441.5 C566.9 443.2 573.8 444.6 579.0 446.0 C584.2 447.4 590.3 448.5 594.6 450.0 C598.9 451.5 601.7 453.6 605.0 455.0 C608.3 456.4 610.0 459.1 614.5 458.6 C619.0 458.1 626.3 453.9 632.0 452.0 C637.7 450.1 642.8 447.0 648.5 447.0 C654.2 447.0 660.3 450.6 666.0 452.0 C671.7 453.4 678.3 455.7 682.6 455.7 C686.9 455.7 689.2 453.4 692.0 452.0 C694.8 450.6 698.6 450.7 699.6 447.0 C700.6 443.3 698.9 435.7 698.0 430.0 C697.1 424.3 692.8 416.8 694.0 413.0 C695.2 409.2 701.2 408.9 705.0 407.0 C708.8 405.1 712.9 404.1 716.6 401.8 C720.3 399.5 723.7 395.8 727.0 393.0 C730.3 390.2 732.5 387.0 736.5 384.8 C740.5 382.6 746.1 381.4 751.0 380.0 C755.9 378.6 761.2 378.3 766.0 376.3 C770.8 374.3 775.8 369.6 780.0 367.8 C784.2 366.0 787.2 366.0 791.0 365.5 C794.8 365.0 798.7 363.4 802.9 365.0 C807.1 366.6 811.8 371.7 816.0 375.0 C820.2 378.3 824.4 384.1 828.4 384.8 C832.4 385.5 836.2 380.6 840.0 379.0 C843.8 377.4 847.5 375.6 851.0 375.0 C854.5 374.4 857.7 375.3 861.0 375.5 C864.3 375.7 869.3 376.2 871.0 376.3"/><path d="M236.0 247.0 C237.2 247.8 240.7 249.5 243.0 252.0 C245.3 254.5 246.8 259.3 250.0 262.0 C253.2 264.7 258.7 268.0 262.0 268.0 C265.3 268.0 267.0 263.7 270.0 262.0 C273.0 260.3 277.3 258.0 280.0 258.0 C282.7 258.0 284.0 260.0 286.0 262.0 C288.0 264.0 291.3 266.7 292.0 270.0 C292.7 273.3 291.2 278.3 290.0 282.0 C288.8 285.7 287.0 289.3 285.0 292.0 C283.0 294.7 278.3 295.0 278.0 298.0 C277.7 301.0 281.0 306.0 283.0 310.0 C285.0 314.0 287.2 318.7 290.0 322.0 C292.8 325.3 296.3 328.0 300.0 330.0 C303.7 332.0 308.0 333.0 312.0 334.0 C316.0 335.0 320.0 336.2 324.0 336.0 C328.0 335.8 332.2 333.8 336.0 333.0 C339.8 332.2 343.3 330.9 347.0 331.0 C350.7 331.1 356.2 333.2 358.0 333.7"/><path d="M236.0 345.0 C237.7 345.8 242.7 348.8 246.0 350.0 C249.3 351.2 253.5 352.8 256.0 352.0 C258.5 351.2 259.3 347.8 261.0 345.0 C262.7 342.2 263.5 337.8 266.0 335.0 C268.5 332.2 272.7 329.5 276.0 328.0 C279.3 326.5 283.7 327.0 286.0 326.0 C288.3 325.0 289.3 322.7 290.0 322.0"/></g>
<g fill="none" stroke="#a39abd" stroke-width="2" opacity=".85"><path d="M964.6 84.0 C964.6 84.7 965.7 84.0 964.6 88.0 C963.5 92.0 959.9 101.8 958.0 108.0 C956.1 114.2 954.7 119.2 953.0 125.0 C951.3 130.8 949.4 137.3 948.0 143.0 C946.6 148.7 944.9 154.2 944.7 159.0 C944.5 163.8 946.5 167.8 947.0 172.0 C947.5 176.2 948.3 179.8 947.6 184.5 C946.9 189.2 944.9 195.3 943.0 200.0 C941.1 204.7 938.3 209.3 936.0 212.8 C933.7 216.3 931.8 218.6 929.0 221.0 C926.2 223.4 922.8 225.6 919.0 227.0 C915.2 228.4 910.2 229.0 906.0 229.5 C901.8 230.0 896.7 228.7 893.7 229.8 C890.7 230.9 889.5 233.6 888.0 236.0 C886.5 238.4 885.8 240.0 885.0 244.0 C884.2 248.0 883.5 254.5 883.0 260.0 C882.5 265.5 882.4 269.4 882.3 277.0 C882.2 284.6 882.8 298.2 882.3 305.4 C881.8 312.6 880.2 315.3 879.0 320.0 C877.8 324.7 875.7 330.4 875.2 333.7 C874.7 337.0 875.3 338.1 876.0 340.0 C876.7 341.9 877.5 342.0 879.5 345.0 C881.5 348.0 885.2 353.7 888.0 358.0 C890.8 362.3 894.9 366.4 896.5 370.6 C898.1 374.8 897.7 378.8 897.9 383.0 C898.1 387.2 897.5 392.3 897.9 396.0 C898.2 399.7 898.8 402.2 900.0 405.0 C901.2 407.8 901.7 409.8 905.0 413.0 C908.3 416.2 914.8 420.7 920.0 424.0 C925.2 427.3 928.7 430.2 936.2 433.0 C943.7 435.8 955.5 438.7 965.0 441.0 C974.5 443.3 985.2 445.3 993.0 447.0 C1000.8 448.7 1005.7 449.8 1012.0 451.0 C1018.3 452.2 1027.8 453.8 1031.0 454.3"/><path d="M871 377L897.5 377"/><path d="M905 413L880 424"/></g>
<g><circle cx="331" cy="115.5" r="1.8" fill="#f6f4ee" stroke="#666" stroke-width=".8"/><circle cx="347" cy="137.5" r="1.8" fill="#f6f4ee" stroke="#666" stroke-width=".8"/><circle cx="400.5" cy="127.7" r="1.8" fill="#f6f4ee" stroke="#666" stroke-width=".8"/><circle cx="312" cy="211.5" r="1.8" fill="#f6f4ee" stroke="#666" stroke-width=".8"/><circle cx="284" cy="221.5" r="1.8" fill="#f6f4ee" stroke="#666" stroke-width=".8"/><circle cx="375" cy="232.5" r="1.8" fill="#f6f4ee" stroke="#666" stroke-width=".8"/><circle cx="317" cy="251.5" r="1.8" fill="#f6f4ee" stroke="#666" stroke-width=".8"/><circle cx="462.4" cy="225.5" r="1.8" fill="#f6f4ee" stroke="#666" stroke-width=".8"/><circle cx="626.5" cy="174.5" r="1.8" fill="#f6f4ee" stroke="#666" stroke-width=".8"/><circle cx="733" cy="197" r="1.8" fill="#f6f4ee" stroke="#666" stroke-width=".8"/><circle cx="737.5" cy="218.5" r="1.8" fill="#f6f4ee" stroke="#666" stroke-width=".8"/><circle cx="652" cy="240.5" r="1.8" fill="#f6f4ee" stroke="#666" stroke-width=".8"/><circle cx="807" cy="100.5" r="1.8" fill="#f6f4ee" stroke="#666" stroke-width=".8"/><circle cx="920.8" cy="148.5" r="1.8" fill="#f6f4ee" stroke="#666" stroke-width=".8"/><circle cx="312" cy="306" r="1.8" fill="#f6f4ee" stroke="#666" stroke-width=".8"/><circle cx="273" cy="318" r="1.8" fill="#f6f4ee" stroke="#666" stroke-width=".8"/><circle cx="358.6" cy="384.5" r="1.8" fill="#f6f4ee" stroke="#666" stroke-width=".8"/><circle cx="420.4" cy="374.5" r="1.8" fill="#f6f4ee" stroke="#666" stroke-width=".8"/><circle cx="431.5" cy="449" r="1.8" fill="#f6f4ee" stroke="#666" stroke-width=".8"/><circle cx="533.5" cy="351.5" r="1.8" fill="#f6f4ee" stroke="#666" stroke-width=".8"/><circle cx="631" cy="297.5" r="1.8" fill="#f6f4ee" stroke="#666" stroke-width=".8"/><circle cx="732.5" cy="315.5" r="1.8" fill="#f6f4ee" stroke="#666" stroke-width=".8"/><circle cx="583.2" cy="373.7" r="1.8" fill="#f6f4ee" stroke="#666" stroke-width=".8"/><circle cx="645" cy="382.8" r="1.8" fill="#f6f4ee" stroke="#666" stroke-width=".8"/><circle cx="736.5" cy="415" r="1.8" fill="#f6f4ee" stroke="#666" stroke-width=".8"/><circle cx="797" cy="407" r="1.8" fill="#f6f4ee" stroke="#666" stroke-width=".8"/><circle cx="858" cy="222.5" r="1.8" fill="#f6f4ee" stroke="#666" stroke-width=".8"/><circle cx="270" cy="376" r="3.2" fill="#f6f4ee" stroke="#444" stroke-width="1"/><circle cx="270" cy="376" r="1.2" fill="#444"/><circle cx="441.7" cy="288.3" r="3.2" fill="#f6f4ee" stroke="#444" stroke-width="1"/><text x="330.2" y="112.3" font-size="10.5" text-anchor="middle" fill="#333" stroke="#fff" stroke-opacity=".75" stroke-width="2.2" paint-order="stroke" stroke-linejoin="round">Бор</text><text x="346.6" y="134.3" font-size="10.5" text-anchor="middle" fill="#333" stroke="#fff" stroke-opacity=".75" stroke-width="2.2" paint-order="stroke" stroke-linejoin="round">Зајечар</text><text x="401" y="138.3" font-size="10.5" text-anchor="middle" fill="#333" stroke="#fff" stroke-opacity=".75" stroke-width="2.2" paint-order="stroke" stroke-linejoin="round">Видин</text><text x="312" y="207.3" font-size="10.5" text-anchor="middle" fill="#333" stroke="#fff" stroke-opacity=".75" stroke-width="2.2" paint-order="stroke" stroke-linejoin="round">Ниш</text><text x="284.2" y="233.8" font-size="10.5" text-anchor="middle" fill="#333" stroke="#fff" stroke-opacity=".75" stroke-width="2.2" paint-order="stroke" stroke-linejoin="round">Прокупље</text><text x="375" y="228.3" font-size="10.5" text-anchor="middle" fill="#333" stroke="#fff" stroke-opacity=".75" stroke-width="2.2" paint-order="stroke" stroke-linejoin="round">Пирот</text><text x="316.9" y="263.8" font-size="10.5" text-anchor="middle" fill="#333" stroke="#fff" stroke-opacity=".75" stroke-width="2.2" paint-order="stroke" stroke-linejoin="round">Лесковац</text><text x="462.4" y="222.3" font-size="10.5" text-anchor="middle" fill="#333" stroke="#fff" stroke-opacity=".75" stroke-width="2.2" paint-order="stroke" stroke-linejoin="round">Враца</text><text x="626.7" y="185.8" font-size="10.5" text-anchor="middle" fill="#333" stroke="#fff" stroke-opacity=".75" stroke-width="2.2" paint-order="stroke" stroke-linejoin="round">Свищов</text><text x="681" y="141.8" font-size="10.5" text-anchor="middle" fill="#333" stroke="#fff" stroke-opacity=".75" stroke-width="2.2" paint-order="stroke" stroke-linejoin="round">Русе</text><text x="733" y="197.8" font-size="10.5" text-anchor="middle" fill="#333" stroke="#fff" stroke-opacity=".75" stroke-width="2.2" paint-order="stroke" stroke-linejoin="round">Разград</text><text x="737.9" y="231.3" font-size="10.5" text-anchor="middle" fill="#333" stroke="#fff" stroke-opacity=".75" stroke-width="2.2" paint-order="stroke" stroke-linejoin="round">Търговище</text><text x="652" y="252.3" font-size="10.5" text-anchor="middle" fill="#333" stroke="#fff" stroke-opacity=".75" stroke-width="2.2" paint-order="stroke" stroke-linejoin="round">Велико</text><text x="652" y="263.8" font-size="10.5" text-anchor="middle" fill="#333" stroke="#fff" stroke-opacity=".75" stroke-width="2.2" paint-order="stroke" stroke-linejoin="round">Търново</text><text x="807" y="112.8" font-size="10.5" text-anchor="middle" fill="#333" stroke="#fff" stroke-opacity=".75" stroke-width="2.2" paint-order="stroke" stroke-linejoin="round">Călărași</text><text x="920.6" y="160.8" font-size="10.5" text-anchor="middle" fill="#333" stroke="#fff" stroke-opacity=".75" stroke-width="2.2" paint-order="stroke" stroke-linejoin="round">Mangalia</text><text x="879.5" y="229.8" font-size="10.5" text-anchor="middle" fill="#333" stroke="#fff" stroke-opacity=".75" stroke-width="2.2" paint-order="stroke" stroke-linejoin="round">Варна</text><text x="312" y="302.3" font-size="10.5" text-anchor="middle" fill="#333" stroke="#fff" stroke-opacity=".75" stroke-width="2.2" paint-order="stroke" stroke-linejoin="round">Врање</text><text x="272.9" y="314.3" font-size="10.5" text-anchor="middle" fill="#333" stroke="#fff" stroke-opacity=".75" stroke-width="2.2" paint-order="stroke" stroke-linejoin="round">Gjilan</text><text x="358.6" y="380.3" font-size="10.5" text-anchor="middle" fill="#333" stroke="#fff" stroke-opacity=".75" stroke-width="2.2" paint-order="stroke" stroke-linejoin="round">Кочани</text><text x="420.4" y="369.8" font-size="10.5" text-anchor="middle" fill="#333" stroke="#fff" stroke-opacity=".75" stroke-width="2.2" paint-order="stroke" stroke-linejoin="round">Благоевград</text><text x="453.9" y="451.8" font-size="10.5" text-anchor="middle" fill="#333" stroke="#fff" stroke-opacity=".75" stroke-width="2.2" paint-order="stroke" stroke-linejoin="round">Петрич</text><text x="502.5" y="354.3" font-size="10.5" text-anchor="middle" fill="#333" stroke="#fff" stroke-opacity=".75" stroke-width="2.2" paint-order="stroke" stroke-linejoin="round">Пазарджик</text><text x="630.6" y="308.8" font-size="10.5" text-anchor="middle" fill="#333" stroke="#fff" stroke-opacity=".75" stroke-width="2.2" paint-order="stroke" stroke-linejoin="round">Казанлък</text><text x="750.6" y="318.8" font-size="10.5" text-anchor="middle" fill="#333" stroke="#fff" stroke-opacity=".75" stroke-width="2.2" paint-order="stroke" stroke-linejoin="round">Ямбол</text><text x="583.3" y="370.8" font-size="10.5" text-anchor="middle" fill="#333" stroke="#fff" stroke-opacity=".75" stroke-width="2.2" paint-order="stroke" stroke-linejoin="round">Асеновград</text><text x="644.8" y="378.8" font-size="10.5" text-anchor="middle" fill="#333" stroke="#fff" stroke-opacity=".75" stroke-width="2.2" paint-order="stroke" stroke-linejoin="round">Хасково</text><text x="736.5" y="426.3" font-size="10.5" text-anchor="middle" fill="#333" stroke="#fff" stroke-opacity=".75" stroke-width="2.2" paint-order="stroke" stroke-linejoin="round">Edirne</text><text x="796.6" y="403.3" font-size="10.5" text-anchor="middle" fill="#333" stroke="#fff" stroke-opacity=".75" stroke-width="2.2" paint-order="stroke" stroke-linejoin="round">Kırklareli</text><text x="441.7" y="282.3" font-size="10.5" text-anchor="middle" fill="#333" stroke="#fff" stroke-opacity=".75" stroke-width="2.2" paint-order="stroke" stroke-linejoin="round">София</text><text x="385" y="155.2" font-size="10.8" text-anchor="middle" fill="#8d618b" font-style="italic" stroke="#fff" stroke-opacity=".75" stroke-width="2.2" paint-order="stroke" stroke-linejoin="round">Видин</text><text x="472.9" y="103.7" font-size="10.8" text-anchor="middle" fill="#8d618b" font-style="italic" stroke="#fff" stroke-opacity=".75" stroke-width="2.2" paint-order="stroke" stroke-linejoin="round">Dolj</text><text x="423.2" y="195.2" font-size="10.8" text-anchor="middle" fill="#8d618b" font-style="italic" stroke="#fff" stroke-opacity=".75" stroke-width="2.2" paint-order="stroke" stroke-linejoin="round">Монтана</text><text x="478" y="205.7" font-size="10.8" text-anchor="middle" fill="#8d618b" font-style="italic" stroke="#fff" stroke-opacity=".75" stroke-width="2.2" paint-order="stroke" stroke-linejoin="round">Враца</text><text x="546.4" y="93.2" font-size="10.8" text-anchor="middle" fill="#8d618b" font-style="italic" stroke="#fff" stroke-opacity=".75" stroke-width="2.2" paint-order="stroke" stroke-linejoin="round">Olt</text><text x="611.6" y="120.7" font-size="10.8" text-anchor="middle" fill="#8d618b" font-style="italic" stroke="#fff" stroke-opacity=".75" stroke-width="2.2" paint-order="stroke" stroke-linejoin="round">Teleorman</text><text x="690.5" y="114.2" font-size="10.8" text-anchor="middle" fill="#8d618b" font-style="italic" stroke="#fff" stroke-opacity=".75" stroke-width="2.2" paint-order="stroke" stroke-linejoin="round">Giurgiu</text><text x="688.8" y="171.7" font-size="10.8" text-anchor="middle" fill="#8d618b" font-style="italic" stroke="#fff" stroke-opacity=".75" stroke-width="2.2" paint-order="stroke" stroke-linejoin="round">Русе</text><text x="558.6" y="195.2" font-size="10.8" text-anchor="middle" fill="#8d618b" font-style="italic" stroke="#fff" stroke-opacity=".75" stroke-width="2.2" paint-order="stroke" stroke-linejoin="round">Плевен</text><text x="743" y="175.7" font-size="10.8" text-anchor="middle" fill="#8d618b" font-style="italic" stroke="#fff" stroke-opacity=".75" stroke-width="2.2" paint-order="stroke" stroke-linejoin="round">Разград</text><text x="650" y="229.2" font-size="10.8" text-anchor="middle" fill="#8d618b" font-style="italic" stroke="#fff" stroke-opacity=".75" stroke-width="2.2" paint-order="stroke" stroke-linejoin="round">Велико Търново</text><text x="547.8" y="249.7" font-size="10.8" text-anchor="middle" fill="#8d618b" font-style="italic" stroke="#fff" stroke-opacity=".75" stroke-width="2.2" paint-order="stroke" stroke-linejoin="round">Ловеч</text><text x="780" y="216.2" font-size="10.8" text-anchor="middle" fill="#8d618b" font-style="italic" stroke="#fff" stroke-opacity=".75" stroke-width="2.2" paint-order="stroke" stroke-linejoin="round">Шумен</text><text x="783" y="142.7" font-size="10.8" text-anchor="middle" fill="#8d618b" font-style="italic" stroke="#fff" stroke-opacity=".75" stroke-width="2.2" paint-order="stroke" stroke-linejoin="round">Силистра</text><text x="914.4" y="96.7" font-size="10.8" text-anchor="middle" fill="#8d618b" font-style="italic" stroke="#fff" stroke-opacity=".75" stroke-width="2.2" paint-order="stroke" stroke-linejoin="round">Constanța</text><text x="858.2" y="173.7" font-size="10.8" text-anchor="middle" fill="#8d618b" font-style="italic" stroke="#fff" stroke-opacity=".75" stroke-width="2.2" paint-order="stroke" stroke-linejoin="round">Добрич</text><text x="830.7" y="229.2" font-size="10.8" text-anchor="middle" fill="#8d618b" font-style="italic" stroke="#fff" stroke-opacity=".75" stroke-width="2.2" paint-order="stroke" stroke-linejoin="round">Варна</text><text x="380.7" y="439.7" font-size="10.8" text-anchor="middle" fill="#8d618b" font-style="italic" stroke="#fff" stroke-opacity=".75" stroke-width="2.2" paint-order="stroke" stroke-linejoin="round">Југоисточен</text><text x="380.7" y="452.2" font-size="10.8" text-anchor="middle" fill="#8d618b" font-style="italic" stroke="#fff" stroke-opacity=".75" stroke-width="2.2" paint-order="stroke" stroke-linejoin="round">СР</text><text x="272.9" y="466.2" font-size="10.8" text-anchor="middle" fill="#8d618b" font-style="italic" stroke="#fff" stroke-opacity=".75" stroke-width="2.2" paint-order="stroke" stroke-linejoin="round">Пелагониски</text><text x="402" y="339.2" font-size="10.8" text-anchor="middle" fill="#8d618b" font-style="italic" stroke="#fff" stroke-opacity=".75" stroke-width="2.2" paint-order="stroke" stroke-linejoin="round">Кюстендил</text><text x="456.7" y="409.7" font-size="10.8" text-anchor="middle" fill="#8d618b" font-style="italic" stroke="#fff" stroke-opacity=".75" stroke-width="2.2" paint-order="stroke" stroke-linejoin="round">Благоевград</text><text x="500" y="300.2" font-size="10.8" text-anchor="middle" fill="#8d618b" font-style="italic" stroke="#fff" stroke-opacity=".75" stroke-width="2.2" paint-order="stroke" stroke-linejoin="round">Софийска</text><text x="644.3" y="328.2" font-size="10.8" text-anchor="middle" fill="#8d618b" font-style="italic" stroke="#fff" stroke-opacity=".75" stroke-width="2.2" paint-order="stroke" stroke-linejoin="round">Стара Загора</text><text x="709.5" y="299.7" font-size="10.8" text-anchor="middle" fill="#8d618b" font-style="italic" stroke="#fff" stroke-opacity=".75" stroke-width="2.2" paint-order="stroke" stroke-linejoin="round">Сливен</text><text x="736.5" y="340.7" font-size="10.8" text-anchor="middle" fill="#8d618b" font-style="italic" stroke="#fff" stroke-opacity=".75" stroke-width="2.2" paint-order="stroke" stroke-linejoin="round">Ямбол</text><text x="575.3" y="349.7" font-size="10.8" text-anchor="middle" fill="#8d618b" font-style="italic" stroke="#fff" stroke-opacity=".75" stroke-width="2.2" paint-order="stroke" stroke-linejoin="round">Пловдив</text><text x="678.3" y="406.7" font-size="10.8" text-anchor="middle" fill="#8d618b" font-style="italic" stroke="#fff" stroke-opacity=".75" stroke-width="2.2" paint-order="stroke" stroke-linejoin="round">Хасково</text><text x="557.2" y="425.2" font-size="10.8" text-anchor="middle" fill="#8d618b" font-style="italic" stroke="#fff" stroke-opacity=".75" stroke-width="2.2" paint-order="stroke" stroke-linejoin="round">Смолян</text><text x="630.6" y="431.7" font-size="10.8" text-anchor="middle" fill="#8d618b" font-style="italic" stroke="#fff" stroke-opacity=".75" stroke-width="2.2" paint-order="stroke" stroke-linejoin="round">Кърджали</text><text x="794.4" y="323.7" font-size="10.8" text-anchor="middle" fill="#8d618b" font-style="italic" stroke="#fff" stroke-opacity=".75" stroke-width="2.2" paint-order="stroke" stroke-linejoin="round">Бургас</text><text x="837" y="419.7" font-size="10.8" text-anchor="middle" fill="#8d618b" font-style="italic" stroke="#fff" stroke-opacity=".75" stroke-width="2.2" paint-order="stroke" stroke-linejoin="round">Kırklareli</text><text x="780" y="89.2" font-size="10.8" text-anchor="middle" fill="#8d618b" font-style="italic" stroke="#fff" stroke-opacity=".75" stroke-width="2.2" paint-order="stroke" stroke-linejoin="round">Călărași</text><text x="253" y="103" font-size="13.3" text-anchor="end" fill="#7a6a8a" letter-spacing=".7" stroke="#fff" stroke-opacity=".75" stroke-width="2.2" paint-order="stroke" stroke-linejoin="round">Србија</text><text x="250" y="122" font-size="10.5" text-anchor="end" fill="#333" stroke="#fff" stroke-opacity=".75" stroke-width="2.2" paint-order="stroke" stroke-linejoin="round">Крагујевац</text><text x="259" y="165.5" font-size="10.8" text-anchor="end" fill="#8d618b" font-style="italic" stroke="#fff" stroke-opacity=".75" stroke-width="2.2" paint-order="stroke" stroke-linejoin="round">Централна</text><text x="245" y="179" font-size="10.8" text-anchor="end" fill="#8d618b" font-style="italic" stroke="#fff" stroke-opacity=".75" stroke-width="2.2" paint-order="stroke" stroke-linejoin="round">Србија</text><text x="240" y="262" font-size="10.5" text-anchor="end" fill="#333" stroke="#fff" stroke-opacity=".75" stroke-width="2.2" paint-order="stroke" stroke-linejoin="round">Kosovë</text><text x="251" y="302" font-size="11.5" text-anchor="end" fill="#555" stroke="#fff" stroke-opacity=".75" stroke-width="2.2" paint-order="stroke" stroke-linejoin="round">Kosova /</text><text x="249" y="318" font-size="11.5" text-anchor="end" fill="#555" stroke="#fff" stroke-opacity=".75" stroke-width="2.2" paint-order="stroke" stroke-linejoin="round">Kosovo</text><text x="259" y="345" font-size="10.5" text-anchor="end" fill="#333" stroke="#fff" stroke-opacity=".75" stroke-width="2.2" paint-order="stroke" stroke-linejoin="round">Ferizaj</text><text x="246" y="386" font-size="10.5" text-anchor="end" fill="#333" stroke="#fff" stroke-opacity=".75" stroke-width="2.2" paint-order="stroke" stroke-linejoin="round">Тетово</text><text x="243" y="414" font-size="10.5" text-anchor="end" fill="#333" stroke="#fff" stroke-opacity=".75" stroke-width="2.2" paint-order="stroke" stroke-linejoin="round">Гостивар</text><text x="244" y="432" font-size="10.5" text-anchor="end" fill="#333" stroke="#fff" stroke-opacity=".75" stroke-width="2.2" paint-order="stroke" stroke-linejoin="round">Кичево</text><text x="270" y="369" font-size="12.6" text-anchor="middle" fill="#333" stroke="#fff" stroke-opacity=".75" stroke-width="2.2" paint-order="stroke" stroke-linejoin="round">Скопје</text><text x="299" y="418" font-size="13.4" text-anchor="middle" fill="#7a6a8a" letter-spacing=".7" stroke="#fff" stroke-opacity=".75" stroke-width="2.2" paint-order="stroke" stroke-linejoin="round">Северна</text><text x="299" y="434" font-size="13.4" text-anchor="middle" fill="#7a6a8a" letter-spacing=".7" stroke="#fff" stroke-opacity=".75" stroke-width="2.2" paint-order="stroke" stroke-linejoin="round">Македонија</text><text x="625" y="288" font-size="13.3" text-anchor="middle" fill="#7a6a8a" letter-spacing=".7" stroke="#fff" stroke-opacity=".75" stroke-width="2.2" paint-order="stroke" stroke-linejoin="round">България</text></g>
<circle cx="399.5" cy="125" r="19.0" fill="url(#h22)"/>
<circle cx="433" cy="150" r="17.2" fill="url(#h5)"/>
<circle cx="432" cy="200" r="17.8" fill="url(#h8)"/>
<circle cx="462" cy="225" r="17.8" fill="url(#h11)"/>
<circle cx="558" cy="197" r="18.4" fill="url(#h23)"/>
<circle cx="505" cy="192" r="17.2" fill="url(#h4)"/>
<circle cx="522" cy="216" r="17.2" fill="url(#h4)"/>
<circle cx="567" cy="238" r="17.8" fill="url(#h9)"/>
<circle cx="600" cy="236" r="17.2" fill="url(#h4)"/>
<circle cx="652" cy="240" r="17.8" fill="url(#h21)"/>
<circle cx="620" cy="266" r="17.8" fill="url(#h12)"/>
<circle cx="681" cy="146" r="17.8" fill="url(#h26)"/>
<circle cx="733" cy="186" r="17.8" fill="url(#h8)"/>
<circle cx="737" cy="220" r="17.8" fill="url(#h10)"/>
<circle cx="772" cy="214" r="18.4" fill="url(#h11)"/>
<circle cx="703" cy="215" r="17.8" fill="url(#h4)"/>
<circle cx="780" cy="148" r="17.8" fill="url(#h4)"/>
<circle cx="797" cy="112" r="16.1" fill="url(#h8)"/>
<circle cx="852" cy="178" r="18.4" fill="url(#h16)"/>
<circle cx="560" cy="150" r="17.2" fill="url(#h3)"/>
<circle cx="640" cy="200" r="19.5" fill="url(#h3)"/>
<circle cx="410" cy="297" r="17.8" fill="url(#h18)"/>
<circle cx="383" cy="342" r="17.8" fill="url(#h11)"/>
<circle cx="420" cy="374" r="17.8" fill="url(#h21)"/>
<circle cx="456" cy="388" r="18.4" fill="url(#h19)"/>
<circle cx="440" cy="425" r="19.5" fill="url(#h10)"/>
<circle cx="483" cy="420" r="18.4" fill="url(#h9)"/>
<circle cx="432" cy="450" r="18.4" fill="url(#h12)"/>
<circle cx="533" cy="351" r="19.5" fill="url(#h24)"/>
<circle cx="505" cy="365" r="17.8" fill="url(#h9)"/>
<circle cx="583" cy="374" r="17.8" fill="url(#h11)"/>
<circle cx="645" cy="383" r="20.1" fill="url(#h21)"/>
<circle cx="628" cy="415" r="18.4" fill="url(#h18)"/>
<circle cx="651" cy="320" r="18.4" fill="url(#h22)"/>
<circle cx="631" cy="297" r="17.8" fill="url(#h9)"/>
<circle cx="713" cy="289" r="17.8" fill="url(#h27)"/>
<circle cx="732" cy="315" r="17.8" fill="url(#h21)"/>
<circle cx="818.5" cy="310.5" r="17.8" fill="url(#h30)"/>
<circle cx="790" cy="288" r="17.8" fill="url(#h4)"/>
<circle cx="850" cy="296" r="15" fill="url(#h4)"/>
<circle cx="700" cy="400" r="17.8" fill="url(#h5)"/>
<circle cx="560" cy="300" r="17.8" fill="url(#h4)"/>
<circle cx="690" cy="300" r="17.2" fill="url(#h4)"/>
<circle cx="760" cy="260" r="17.8" fill="url(#h4)"/>
<circle cx="600" cy="330" r="17.2" fill="url(#h4)"/>
<circle cx="670" cy="345" r="17.2" fill="url(#h4)"/>
<circle cx="540" cy="318" r="17.2" fill="url(#h4)"/>
<circle cx="470" cy="305" r="17.2" fill="url(#h4)"/>
<circle cx="500" cy="240" r="17.8" fill="url(#h3)"/>
<circle cx="590" cy="395" r="17.8" fill="url(#h4)"/>
<circle cx="858.5" cy="222.5" r="19" fill="url(#hv)"/>
<circle cx="441.7" cy="288.3" r="19" fill="url(#hs)"/>
<circle cx="570.5" cy="357" r="18" fill="url(#hp)"/>
<circle cx="441.7" cy="288.3" r="3" fill="none" stroke="#e8d020" stroke-width=".8"/>
<rect x="704" y="446" width="315" height="15.5" fill="#fff" fill-opacity=".65"/>
<text x="707" y="458.3" font-size="13" fill="#333" textLength="308" lengthAdjust="spacingAndGlyphs">Map data © OpenStreetMap contributors, CC-BY-SA</text>
</g>
<rect x="956" y="93.2" width="66" height="33.5" fill="#323232"/>
<path d="M966.3 109.6V117.7H970.7V111.8H975.4V117.7H979.7V109.6M965.4 110.2L968.5 106.6V102.3H970.8V104.9L973.1 102.3L980.8 110.2" fill="none" stroke="#ccc" stroke-width="1.05" stroke-linejoin="miter"/>
<g stroke="#ccc" stroke-width="1.05" fill="none"><path d="M1003.2 103.5H1012.2M1003.2 107.5H1012.2M1003.2 111.4H1012.2M1003.2 115.4H1012.2"/><rect x="998.2" y="102.2" width="2.7" height="2.7"/><circle cx="999.55" cy="107.5" r="1.3"/><rect x="998.2" y="110.1" width="2.7" height="2.7"/><path d="M998 116.8L999.55 113.9L1001.1 116.8Z"/></g>
<rect x="991.3" y="383" width="30.5" height="57.8" fill="#323232"/>
<path d="M1000.2 398H1013.2M1006.7 391.5V404.5M1000.2 424.7H1013.2" stroke="#ccc" stroke-width="1.6" fill="none"/>
<path d="M264 474.5L258 480.5L264 486.5Z" fill="none" stroke="#ccc" stroke-width="1.1"/>
<path d="M1001 474.5L1007.5 480.5L1001 486.5Z" fill="none" stroke="#ccc" stroke-width="1.1"/>
</svg>
<div class="t" style="left:240.7px;top:65.9px;font-size:12.3px;color:#bdbdbd;transform:scaleX(0.9641);font-weight:bold;">Концентрация на карантинирани лица</div>
<div class="t" style="left:534.0px;top:472.8px;font-size:12.6px;color:#d0d0d0;transform:scaleX(1.0210);">Концентрация на карантинирани</div>
<div class="panel" style="left:235px;top:506px;width:795px;height:132px"></div>
<div class="t" style="left:240.5px;top:514.6px;font-size:14.4px;color:#ccc;transform:scaleX(1.0209);">Брой заболели по дни</div>
<svg width="1257" height="666" viewBox="0 0 1257 666">
<line x1="285.0" y1="590.5" x2="997.5" y2="590.5" stroke="#444" stroke-width="1" stroke-dasharray="3 3"/>
<line x1="285.0" y1="574.5" x2="997.5" y2="574.5" stroke="#444" stroke-width="1" stroke-dasharray="3 3"/>
<line x1="285.0" y1="558.5" x2="997.5" y2="558.5" stroke="#444" stroke-width="1" stroke-dasharray="3 3"/>
<line x1="356.3" y1="558.5" x2="356.3" y2="611.5" stroke="#444" stroke-width="1" stroke-dasharray="3 3"/>
<line x1="356.3" y1="606.5" x2="356.3" y2="611.5" stroke="#777" stroke-width="1"/>
<line x1="443.8" y1="558.5" x2="443.8" y2="611.5" stroke="#444" stroke-width="1" stroke-dasharray="3 3"/>
<line x1="443.8" y1="606.5" x2="443.8" y2="611.5" stroke="#777" stroke-width="1"/>
<line x1="535.7" y1="558.5" x2="535.7" y2="611.5" stroke="#444" stroke-width="1" stroke-dasharray="3 3"/>
<line x1="535.7" y1="606.5" x2="535.7" y2="611.5" stroke="#777" stroke-width="1"/>
<line x1="624.3" y1="558.5" x2="624.3" y2="611.5" stroke="#444" stroke-width="1" stroke-dasharray="3 3"/>
<line x1="624.3" y1="606.5" x2="624.3" y2="611.5" stroke="#777" stroke-width="1"/>
<line x1="716.2" y1="558.5" x2="716.2" y2="611.5" stroke="#444" stroke-width="1" stroke-dasharray="3 3"/>
<line x1="716.2" y1="606.5" x2="716.2" y2="611.5" stroke="#777" stroke-width="1"/>
<line x1="807" y1="558.5" x2="807" y2="611.5" stroke="#444" stroke-width="1" stroke-dasharray="3 3"/>
<line x1="807" y1="606.5" x2="807" y2="611.5" stroke="#777" stroke-width="1"/>
<line x1="896.3" y1="558.5" x2="896.3" y2="611.5" stroke="#444" stroke-width="1" stroke-dasharray="3 3"/>
<line x1="896.3" y1="606.5" x2="896.3" y2="611.5" stroke="#777" stroke-width="1"/>
<line x1="987.5" y1="558.5" x2="987.5" y2="611.5" stroke="#444" stroke-width="1" stroke-dasharray="3 3"/>
<line x1="987.5" y1="606.5" x2="987.5" y2="611.5" stroke="#777" stroke-width="1"/>
<line x1="285.0" y1="556" x2="285.0" y2="606.5" stroke="#777" stroke-width="1"/>
<line x1="280.0" y1="606.5" x2="997.5" y2="606.5" stroke="#777" stroke-width="1"/>
<line x1="280.0" y1="606.5" x2="285.0" y2="606.5" stroke="#777" stroke-width="1"/>
<text x="274.0" y="611.0" font-size="12.5" fill="#aaa" text-anchor="end" >0</text>
<line x1="280.0" y1="590.5" x2="285.0" y2="590.5" stroke="#777" stroke-width="1"/>
<text x="274.0" y="595.0" font-size="12.5" fill="#aaa" text-anchor="end" >1k</text>
<line x1="280.0" y1="574.5" x2="285.0" y2="574.5" stroke="#777" stroke-width="1"/>
<text x="274.0" y="579.0" font-size="12.5" fill="#aaa" text-anchor="end" >2k</text>
<line x1="280.0" y1="558.5" x2="285.0" y2="558.5" stroke="#777" stroke-width="1"/>
<text x="274.0" y="563.0" font-size="12.5" fill="#aaa" text-anchor="end" >3k</text>
<text x="309.2" y="624.7" font-size="12" fill="#aaa" text-anchor="middle" >M03</text>
<text x="401.4" y="624.7" font-size="12" fill="#aaa" text-anchor="middle" >M04</text>
<text x="489.6" y="624.7" font-size="12" fill="#aaa" text-anchor="middle" >M05</text>
<text x="581.5" y="624.7" font-size="12" fill="#aaa" text-anchor="middle" >M06</text>
<text x="669.4" y="624.7" font-size="12" fill="#aaa" text-anchor="middle" >M07</text>
<text x="761.3" y="624.7" font-size="12" fill="#aaa" text-anchor="middle" >M08</text>
<text x="852.2" y="624.7" font-size="12" fill="#aaa" text-anchor="middle" >M09</text>
<text x="941.4" y="624.7" font-size="12" fill="#aaa" text-anchor="middle" >M10</text>
<path d="M285.5 606.5v-0.1h3.04v0.1zM288.4 606.5v-0.1h3.04v0.1zM291.4 606.5v-0.2h3.04v0.2zM294.3 606.5v-0.3h3.04v0.3zM297.3 606.5v-0.3h3.04v0.3zM300.2 606.5v-0.2h3.04v0.2zM303.2 606.5v-0.2h3.04v0.2zM306.1 606.5v-0.2h3.04v0.2zM309.1 606.5v-0.2h3.04v0.2zM312.0 606.5v-0.3h3.04v0.3zM315.0 606.5v-0.4h3.04v0.4zM317.9 606.5v-0.4h3.04v0.4zM320.9 606.5v-0.4h3.04v0.4zM323.8 606.5v-0.3h3.04v0.3zM326.8 606.5v-0.2h3.04v0.2zM329.7 606.5v-0.2h3.04v0.2zM332.7 606.5v-0.4h3.04v0.4zM335.6 606.5v-0.5h3.04v0.5zM338.6 606.5v-0.5h3.04v0.5zM341.5 606.5v-0.5h3.04v0.5zM344.5 606.5v-0.4h3.04v0.4zM347.4 606.5v-0.2h3.04v0.2zM350.4 606.5v-0.3h3.04v0.3zM353.3 606.5v-0.5h3.04v0.5zM356.3 606.5v-0.6h3.04v0.6zM359.2 606.5v-0.5h3.04v0.5zM362.2 606.5v-0.8h3.04v0.8zM365.1 606.5v-0.7h3.04v0.7zM368.1 606.5v-0.4h3.04v0.4zM371.0 606.5v-0.6h3.04v0.6zM374.0 606.5v-0.9h3.04v0.9zM376.9 606.5v-1.0h3.04v1.0zM379.9 606.5v-0.8h3.04v0.8zM382.8 606.5v-0.9h3.04v0.9zM385.8 606.5v-0.7h3.04v0.7zM388.7 606.5v-0.4h3.04v0.4zM391.7 606.5v-0.5h3.04v0.5zM394.6 606.5v-0.5h3.04v0.5zM397.6 606.5v-0.5h3.04v0.5zM400.5 606.5v-0.5h3.04v0.5zM403.5 606.5v-0.6h3.04v0.6zM406.4 606.5v-0.3h3.04v0.3zM409.4 606.5v-0.2h3.04v0.2zM412.3 606.5v-0.2h3.04v0.2zM415.3 606.5v-0.3h3.04v0.3zM418.2 606.5v-0.2h3.04v0.2zM421.2 606.5v-0.2h3.04v0.2zM424.1 606.5v-0.2h3.04v0.2zM427.1 606.5v-0.2h3.04v0.2zM430.0 606.5v-0.1h3.04v0.1zM433.0 606.5v-0.2h3.04v0.2zM435.9 606.5v-0.4h3.04v0.4zM438.9 606.5v-0.5h3.04v0.5zM441.8 606.5v-0.6h3.04v0.6zM444.8 606.5v-0.5h3.04v0.5zM447.7 606.5v-0.3h3.04v0.3zM450.7 606.5v-0.2h3.04v0.2zM453.6 606.5v-0.3h3.04v0.3zM456.6 606.5v-0.4h3.04v0.4zM459.5 606.5v-0.4h3.04v0.4zM462.5 606.5v-0.4h3.04v0.4zM465.4 606.5v-0.3h3.04v0.3zM468.4 606.5v-0.3h3.04v0.3zM471.3 606.5v-0.1h3.04v0.1zM474.3 606.5v-0.2h3.04v0.2zM477.2 606.5v-0.3h3.04v0.3zM480.2 606.5v-0.4h3.04v0.4zM483.1 606.5v-0.4h3.04v0.4zM486.1 606.5v-0.3h3.04v0.3zM489.0 606.5v-0.4h3.04v0.4zM492.0 606.5v-0.2h3.04v0.2zM494.9 606.5v-0.2h3.04v0.2zM497.9 606.5v-0.4h3.04v0.4zM500.8 606.5v-0.6h3.04v0.6zM503.8 606.5v-0.6h3.04v0.6zM506.7 606.5v-0.4h3.04v0.4zM509.7 606.5v-0.5h3.04v0.5zM512.6 606.5v-0.2h3.04v0.2zM515.6 606.5v-0.4h3.04v0.4zM518.5 606.5v-0.6h3.04v0.6zM521.5 606.5v-0.7h3.04v0.7zM524.4 606.5v-0.8h3.04v0.8zM527.4 606.5v-0.6h3.04v0.6zM530.3 606.5v-0.6h3.04v0.6zM533.3 606.5v-0.3h3.04v0.3zM536.2 606.5v-0.4h3.04v0.4zM539.2 606.5v-0.9h3.04v0.9zM542.1 606.5v-0.8h3.04v0.8zM545.1 606.5v-0.9h3.04v0.9zM548.0 606.5v-1.1h3.04v1.1zM551.0 606.5v-1.1h3.04v1.1zM553.9 606.5v-0.5h3.04v0.5zM556.9 606.5v-0.7h3.04v0.7zM559.8 606.5v-1.7h3.04v1.7zM562.8 606.5v-1.5h3.04v1.5zM565.7 606.5v-2.0h3.04v2.0zM568.7 606.5v-2.1h3.04v2.1zM571.6 606.5v-1.5h3.04v1.5zM574.6 606.5v-0.9h3.04v0.9zM577.5 606.5v-1.2h3.04v1.2zM580.5 606.5v-2.3h3.04v2.3zM583.4 606.5v-2.4h3.04v2.4zM586.4 606.5v-2.4h3.04v2.4zM589.3 606.5v-2.6h3.04v2.6zM592.3 606.5v-2.5h3.04v2.5zM595.2 606.5v-1.2h3.04v1.2zM598.2 606.5v-1.6h3.04v1.6zM601.1 606.5v-3.1h3.04v3.1zM604.1 606.5v-2.6h3.04v2.6zM607.0 606.5v-2.8h3.04v2.8zM610.0 606.5v-3.7h3.04v3.7zM612.9 606.5v-2.8h3.04v2.8zM615.9 606.5v-1.5h3.04v1.5zM618.8 606.5v-1.6h3.04v1.6zM621.8 606.5v-3.4h3.04v3.4zM624.7 606.5v-4.7h3.04v4.7zM627.7 606.5v-3.8h3.04v3.8zM630.6 606.5v-5.2h3.04v5.2zM633.6 606.5v-4.6h3.04v4.6zM636.5 606.5v-1.9h3.04v1.9zM639.5 606.5v-3.4h3.04v3.4zM642.4 606.5v-5.3h3.04v5.3zM645.4 606.5v-5.8h3.04v5.8zM648.3 606.5v-5.1h3.04v5.1zM651.3 606.5v-5.8h3.04v5.8zM654.2 606.5v-4.9h3.04v4.9zM657.2 606.5v-1.8h3.04v1.8zM660.1 606.5v-2.4h3.04v2.4zM663.1 606.5v-5.0h3.04v5.0zM666.0 606.5v-5.3h3.04v5.3zM669.0 606.5v-3.8h3.04v3.8zM671.9 606.5v-4.0h3.04v4.0zM674.9 606.5v-3.4h3.04v3.4zM677.8 606.5v-1.5h3.04v1.5zM680.8 606.5v-2.0h3.04v2.0zM683.7 606.5v-3.1h3.04v3.1zM686.7 606.5v-3.1h3.04v3.1zM689.6 606.5v-3.3h3.04v3.3zM692.6 606.5v-2.9h3.04v2.9zM695.5 606.5v-2.6h3.04v2.6zM698.5 606.5v-1.6h3.04v1.6zM701.4 606.5v-1.7h3.04v1.7zM704.4 606.5v-3.7h3.04v3.7zM707.3 606.5v-4.1h3.04v4.1zM710.3 606.5v-3.7h3.04v3.7zM713.2 606.5v-3.7h3.04v3.7zM716.2 606.5v-3.8h3.04v3.8zM719.1 606.5v-1.6h3.04v1.6zM722.1 606.5v-2.0h3.04v2.0zM725.0 606.5v-3.7h3.04v3.7zM728.0 606.5v-4.0h3.04v4.0zM730.9 606.5v-3.1h3.04v3.1zM733.9 606.5v-3.4h3.04v3.4zM736.8 606.5v-2.9h3.04v2.9zM739.8 606.5v-1.8h3.04v1.8zM742.7 606.5v-2.0h3.04v2.0zM745.7 606.5v-4.0h3.04v4.0zM748.6 606.5v-3.0h3.04v3.0zM751.6 606.5v-3.2h3.04v3.2zM754.5 606.5v-3.5h3.04v3.5zM757.5 606.5v-3.2h3.04v3.2zM760.4 606.5v-1.4h3.04v1.4zM763.4 606.5v-1.7h3.04v1.7zM766.3 606.5v-2.7h3.04v2.7zM769.3 606.5v-3.1h3.04v3.1zM772.2 606.5v-2.7h3.04v2.7zM775.2 606.5v-3.3h3.04v3.3zM778.1 606.5v-2.8h3.04v2.8zM781.1 606.5v-1.1h3.04v1.1zM784.0 606.5v-1.6h3.04v1.6zM787.0 606.5v-3.1h3.04v3.1zM789.9 606.5v-2.9h3.04v2.9zM792.9 606.5v-3.0h3.04v3.0zM795.8 606.5v-2.5h3.04v2.5zM798.8 606.5v-1.9h3.04v1.9zM801.7 606.5v-1.1h3.04v1.1zM804.7 606.5v-1.7h3.04v1.7zM807.6 606.5v-2.4h3.04v2.4zM810.6 606.5v-2.4h3.04v2.4zM813.5 606.5v-2.6h3.04v2.6zM816.5 606.5v-2.6h3.04v2.6zM819.4 606.5v-2.2h3.04v2.2zM822.4 606.5v-1.4h3.04v1.4zM825.3 606.5v-1.4h3.04v1.4zM828.3 606.5v-2.3h3.04v2.3zM831.2 606.5v-3.3h3.04v3.3zM834.2 606.5v-3.3h3.04v3.3zM837.1 606.5v-3.5h3.04v3.5zM840.1 606.5v-2.4h3.04v2.4zM843.0 606.5v-1.6h3.04v1.6zM846.0 606.5v-2.1h3.04v2.1zM848.9 606.5v-2.7h3.04v2.7zM851.9 606.5v-3.4h3.04v3.4zM854.8 606.5v-3.5h3.04v3.5zM857.8 606.5v-3.3h3.04v3.3zM860.7 606.5v-2.7h3.04v2.7zM863.7 606.5v-1.3h3.04v1.3zM866.6 606.5v-1.8h3.04v1.8zM869.6 606.5v-2.9h3.04v2.9zM872.5 606.5v-2.7h3.04v2.7zM875.5 606.5v-3.4h3.04v3.4zM878.4 606.5v-3.1h3.04v3.1zM881.4 606.5v-3.2h3.04v3.2zM884.3 606.5v-1.2h3.04v1.2zM887.3 606.5v-2.4h3.04v2.4zM890.2 606.5v-3.7h3.04v3.7zM893.2 606.5v-4.1h3.04v4.1zM896.1 606.5v-4.4h3.04v4.4zM899.1 606.5v-4.6h3.04v4.6zM902.0 606.5v-3.7h3.04v3.7zM905.0 606.5v-2.6h3.04v2.6zM907.9 606.5v-2.2h3.04v2.2zM910.9 606.5v-7.0h3.04v7.0zM913.8 606.5v-6.8h3.04v6.8zM916.8 606.5v-7.0h3.04v7.0zM919.7 606.5v-8.3h3.04v8.3zM922.7 606.5v-8.3h3.04v8.3zM925.6 606.5v-6.0h3.04v6.0zM928.6 606.5v-3.4h3.04v3.4zM931.5 606.5v-12.6h3.04v12.6zM934.5 606.5v-13.1h3.04v13.1zM937.4 606.5v-14.6h3.04v14.6zM940.4 606.5v-16.0h3.04v16.0zM943.3 606.5v-16.7h3.04v16.7zM946.3 606.5v-9.8h3.04v9.8zM949.2 606.5v-6.7h3.04v6.7zM952.2 606.5v-16.4h3.04v16.4zM955.1 606.5v-21.4h3.04v21.4zM958.1 606.5v-23.6h3.04v23.6zM961.0 606.5v-25.5h3.04v25.5zM964.0 606.5v-25.4h3.04v25.4zM966.9 606.5v-16.7h3.04v16.7zM969.9 606.5v-10.9h3.04v10.9zM972.8 606.5v-35.9h3.04v35.9zM975.8 606.5v-41.1h3.04v41.1zM978.7 606.5v-44.2h3.04v44.2zM981.7 606.5v-46.3h3.04v46.3zM984.6 606.5v-39.2h3.04v39.2zM987.6 606.5v-29.8h3.04v29.8zM990.5 606.5v-19.6h3.04v19.6zM993.5 606.5v-38.8h3.04v38.8z" fill="#ffaa00"/>
<g stroke="#303030" stroke-width=".6" paint-order="stroke" stroke-linejoin="round"><text x="287.0" y="602.9" font-size="10.5" fill="#c4c4c4" text-anchor="middle" >4</text><text x="289.9" y="602.9" font-size="10.5" fill="#c4c4c4" text-anchor="middle" >9</text><text x="292.9" y="602.8" font-size="10.5" fill="#c4c4c4" text-anchor="middle" >15</text><text x="295.8" y="602.7" font-size="10.5" fill="#c4c4c4" text-anchor="middle" >17</text><text x="298.8" y="602.7" font-size="10.5" fill="#c4c4c4" text-anchor="middle" >18</text><text x="301.7" y="602.8" font-size="10.5" fill="#c4c4c4" text-anchor="middle" >15</text><text x="304.7" y="602.8" font-size="10.5" fill="#c4c4c4" text-anchor="middle" >13</text><text x="307.6" y="602.8" font-size="10.5" fill="#c4c4c4" text-anchor="middle" >10</text><text x="310.6" y="602.8" font-size="10.5" fill="#c4c4c4" text-anchor="middle" >11</text><text x="313.5" y="602.7" font-size="10.5" fill="#c4c4c4" text-anchor="middle" >19</text><text x="316.5" y="602.6" font-size="10.5" fill="#c4c4c4" text-anchor="middle" >26</text><text x="319.4" y="602.6" font-size="10.5" fill="#c4c4c4" text-anchor="middle" >22</text><text x="322.4" y="602.6" font-size="10.5" fill="#c4c4c4" text-anchor="middle" >27</text><text x="325.3" y="602.7" font-size="10.5" fill="#c4c4c4" text-anchor="middle" >20</text><text x="328.3" y="602.8" font-size="10.5" fill="#c4c4c4" text-anchor="middle" >12</text><text x="331.2" y="602.8" font-size="10.5" fill="#c4c4c4" text-anchor="middle" >13</text><text x="334.2" y="602.6" font-size="10.5" fill="#c4c4c4" text-anchor="middle" >28</text><text x="337.1" y="602.5" font-size="10.5" fill="#c4c4c4" text-anchor="middle" >32</text><text x="340.1" y="602.5" font-size="10.5" fill="#c4c4c4" text-anchor="middle" >29</text><text x="343.0" y="602.5" font-size="10.5" fill="#c4c4c4" text-anchor="middle" >32</text><text x="346.0" y="602.6" font-size="10.5" fill="#c4c4c4" text-anchor="middle" >27</text><text x="348.9" y="602.8" font-size="10.5" fill="#c4c4c4" text-anchor="middle" >11</text><text x="351.9" y="602.7" font-size="10.5" fill="#c4c4c4" text-anchor="middle" >21</text><text x="354.8" y="602.5" font-size="10.5" fill="#c4c4c4" text-anchor="middle" >33</text><text x="357.8" y="602.4" font-size="10.5" fill="#c4c4c4" text-anchor="middle" >35</text><text x="360.7" y="602.5" font-size="10.5" fill="#c4c4c4" text-anchor="middle" >34</text><text x="363.7" y="602.2" font-size="10.5" fill="#c4c4c4" text-anchor="middle" >53</text><text x="366.6" y="602.3" font-size="10.5" fill="#c4c4c4" text-anchor="middle" >41</text><text x="369.6" y="602.6" font-size="10.5" fill="#c4c4c4" text-anchor="middle" >25</text><text x="372.5" y="602.4" font-size="10.5" fill="#c4c4c4" text-anchor="middle" >37</text><text x="375.5" y="602.1" font-size="10.5" fill="#c4c4c4" text-anchor="middle" >59</text><text x="378.4" y="602.0" font-size="10.5" fill="#c4c4c4" text-anchor="middle" >64</text><text x="381.4" y="602.2" font-size="10.5" fill="#c4c4c4" text-anchor="middle" >52</text><text x="384.3" y="602.1" font-size="10.5" fill="#c4c4c4" text-anchor="middle" >59</text><text x="387.3" y="602.3" font-size="10.5" fill="#c4c4c4" text-anchor="middle" >42</text><text x="390.2" y="602.6" font-size="10.5" fill="#c4c4c4" text-anchor="middle" >25</text><text x="393.2" y="602.5" font-size="10.5" fill="#c4c4c4" text-anchor="middle" >31</text><text x="396.1" y="602.5" font-size="10.5" fill="#c4c4c4" text-anchor="middle" >34</text><text x="399.1" y="602.5" font-size="10.5" fill="#c4c4c4" text-anchor="middle" >32</text><text x="402.0" y="602.5" font-size="10.5" fill="#c4c4c4" text-anchor="middle" >30</text><text x="405.0" y="602.4" font-size="10.5" fill="#c4c4c4" text-anchor="middle" >35</text><text x="407.9" y="602.7" font-size="10.5" fill="#c4c4c4" text-anchor="middle" >21</text><text x="410.9" y="602.8" font-size="10.5" fill="#c4c4c4" text-anchor="middle" >10</text><text x="413.8" y="602.8" font-size="10.5" fill="#c4c4c4" text-anchor="middle" >10</text><text x="416.8" y="602.7" font-size="10.5" fill="#c4c4c4" text-anchor="middle" >17</text><text x="419.7" y="602.8" font-size="10.5" fill="#c4c4c4" text-anchor="middle" >15</text><text x="422.7" y="602.8" font-size="10.5" fill="#c4c4c4" text-anchor="middle" >14</text><text x="425.6" y="602.8" font-size="10.5" fill="#c4c4c4" text-anchor="middle" >15</text><text x="428.6" y="602.8" font-size="10.5" fill="#c4c4c4" text-anchor="middle" >13</text><text x="431.5" y="602.9" font-size="10.5" fill="#c4c4c4" text-anchor="middle" >9</text><text x="434.5" y="602.8" font-size="10.5" fill="#c4c4c4" text-anchor="middle" >12</text><text x="437.4" y="602.6" font-size="10.5" fill="#c4c4c4" text-anchor="middle" >26</text><text x="440.4" y="602.5" font-size="10.5" fill="#c4c4c4" text-anchor="middle" >29</text><text x="443.3" y="602.4" font-size="10.5" fill="#c4c4c4" text-anchor="middle" >35</text><text x="446.3" y="602.5" font-size="10.5" fill="#c4c4c4" text-anchor="middle" >30</text><text x="449.2" y="602.7" font-size="10.5" fill="#c4c4c4" text-anchor="middle" >19</text><text x="452.2" y="602.8" font-size="10.5" fill="#c4c4c4" text-anchor="middle" >12</text><text x="455.1" y="602.7" font-size="10.5" fill="#c4c4c4" text-anchor="middle" >16</text><text x="458.1" y="602.6" font-size="10.5" fill="#c4c4c4" text-anchor="middle" >26</text><text x="461.0" y="602.6" font-size="10.5" fill="#c4c4c4" text-anchor="middle" >22</text><text x="464.0" y="602.6" font-size="10.5" fill="#c4c4c4" text-anchor="middle" >22</text><text x="466.9" y="602.7" font-size="10.5" fill="#c4c4c4" text-anchor="middle" >17</text><text x="469.9" y="602.7" font-size="10.5" fill="#c4c4c4" text-anchor="middle" >19</text><text x="472.8" y="602.9" font-size="10.5" fill="#c4c4c4" text-anchor="middle" >9</text><text x="475.8" y="602.8" font-size="10.5" fill="#c4c4c4" text-anchor="middle" >11</text><text x="478.7" y="602.7" font-size="10.5" fill="#c4c4c4" text-anchor="middle" >17</text><text x="481.7" y="602.6" font-size="10.5" fill="#c4c4c4" text-anchor="middle" >24</text><text x="484.6" y="602.6" font-size="10.5" fill="#c4c4c4" text-anchor="middle" >27</text><text x="487.6" y="602.7" font-size="10.5" fill="#c4c4c4" text-anchor="middle" >20</text><text x="490.5" y="602.6" font-size="10.5" fill="#c4c4c4" text-anchor="middle" >24</text><text x="493.5" y="602.8" font-size="10.5" fill="#c4c4c4" text-anchor="middle" >11</text><text x="496.4" y="602.8" font-size="10.5" fill="#c4c4c4" text-anchor="middle" >14</text><text x="499.4" y="602.6" font-size="10.5" fill="#c4c4c4" text-anchor="middle" >27</text><text x="502.3" y="602.4" font-size="10.5" fill="#c4c4c4" text-anchor="middle" >35</text><text x="505.3" y="602.4" font-size="10.5" fill="#c4c4c4" text-anchor="middle" >38</text><text x="508.2" y="602.6" font-size="10.5" fill="#c4c4c4" text-anchor="middle" >28</text><text x="511.2" y="602.5" font-size="10.5" fill="#c4c4c4" text-anchor="middle" >32</text><text x="514.1" y="602.8" font-size="10.5" fill="#c4c4c4" text-anchor="middle" >13</text><text x="517.1" y="602.6" font-size="10.5" fill="#c4c4c4" text-anchor="middle" >25</text><text x="520.0" y="602.4" font-size="10.5" fill="#c4c4c4" text-anchor="middle" >36</text><text x="523.0" y="602.3" font-size="10.5" fill="#c4c4c4" text-anchor="middle" >45</text><text x="525.9" y="602.2" font-size="10.5" fill="#c4c4c4" text-anchor="middle" >47</text><text x="528.9" y="602.4" font-size="10.5" fill="#c4c4c4" text-anchor="middle" >40</text><text x="531.8" y="602.4" font-size="10.5" fill="#c4c4c4" text-anchor="middle" >40</text><text x="534.8" y="602.7" font-size="10.5" fill="#c4c4c4" text-anchor="middle" >16</text><text x="537.7" y="602.6" font-size="10.5" fill="#c4c4c4" text-anchor="middle" >22</text><text x="540.7" y="602.1" font-size="10.5" fill="#c4c4c4" text-anchor="middle" >54</text><text x="543.6" y="602.2" font-size="10.5" fill="#c4c4c4" text-anchor="middle" >47</text><text x="546.6" y="602.1" font-size="10.5" fill="#c4c4c4" text-anchor="middle" >56</text><text x="549.5" y="601.9" font-size="10.5" fill="#c4c4c4" text-anchor="middle" >67</text><text x="552.5" y="601.9" font-size="10.5" fill="#c4c4c4" text-anchor="middle" >67</text><text x="555.4" y="602.5" font-size="10.5" fill="#c4c4c4" text-anchor="middle" >31</text><text x="558.4" y="602.3" font-size="10.5" fill="#c4c4c4" text-anchor="middle" >43</text><text x="561.3" y="601.3" font-size="10.5" fill="#c4c4c4" text-anchor="middle" >107</text><text x="564.3" y="601.5" font-size="10.5" fill="#c4c4c4" text-anchor="middle" >92</text><text x="567.2" y="601.0" font-size="10.5" fill="#c4c4c4" text-anchor="middle" >125</text><text x="570.2" y="600.9" font-size="10.5" fill="#c4c4c4" text-anchor="middle" >129</text><text x="573.1" y="601.5" font-size="10.5" fill="#c4c4c4" text-anchor="middle" >95</text><text x="576.1" y="602.1" font-size="10.5" fill="#c4c4c4" text-anchor="middle" >54</text><text x="579.0" y="601.8" font-size="10.5" fill="#c4c4c4" text-anchor="middle" >78</text><text x="582.0" y="600.7" font-size="10.5" fill="#c4c4c4" text-anchor="middle" >143</text><text x="584.9" y="600.6" font-size="10.5" fill="#c4c4c4" text-anchor="middle" >147</text><text x="587.9" y="600.6" font-size="10.5" fill="#c4c4c4" text-anchor="middle" >151</text><text x="590.8" y="600.4" font-size="10.5" fill="#c4c4c4" text-anchor="middle" >161</text><text x="593.8" y="600.5" font-size="10.5" fill="#c4c4c4" text-anchor="middle" >159</text><text x="596.7" y="601.8" font-size="10.5" fill="#c4c4c4" text-anchor="middle" >74</text><text x="599.7" y="601.4" font-size="10.5" fill="#c4c4c4" text-anchor="middle" >100</text><text x="602.6" y="599.9" font-size="10.5" fill="#c4c4c4" text-anchor="middle" >193</text><text x="605.6" y="600.4" font-size="10.5" fill="#c4c4c4" text-anchor="middle" >164</text><text x="608.5" y="600.2" font-size="10.5" fill="#c4c4c4" text-anchor="middle" >174</text><text x="611.5" y="599.3" font-size="10.5" fill="#c4c4c4" text-anchor="middle" >233</text><text x="614.4" y="600.2" font-size="10.5" fill="#c4c4c4" text-anchor="middle" >173</text><text x="617.4" y="601.5" font-size="10.5" fill="#c4c4c4" text-anchor="middle" >95</text><text x="620.3" y="601.4" font-size="10.5" fill="#c4c4c4" text-anchor="middle" >103</text><text x="623.3" y="599.6" font-size="10.5" fill="#c4c4c4" text-anchor="middle" >212</text><text x="626.2" y="598.3" font-size="10.5" fill="#c4c4c4" text-anchor="middle" >292</text><text x="629.2" y="599.2" font-size="10.5" fill="#c4c4c4" text-anchor="middle" >240</text><text x="632.1" y="597.8" font-size="10.5" fill="#c4c4c4" text-anchor="middle" >323</text><text x="635.1" y="598.4" font-size="10.5" fill="#c4c4c4" text-anchor="middle" >286</text><text x="638.0" y="601.1" font-size="10.5" fill="#c4c4c4" text-anchor="middle" >121</text><text x="640.9" y="599.6" font-size="10.5" fill="#c4c4c4" text-anchor="middle" >211</text><text x="643.9" y="597.7" font-size="10.5" fill="#c4c4c4" text-anchor="middle" >334</text><text x="646.8" y="597.2" font-size="10.5" fill="#c4c4c4" text-anchor="middle" >364</text><text x="649.8" y="597.9" font-size="10.5" fill="#c4c4c4" text-anchor="middle" >318</text><text x="652.7" y="597.2" font-size="10.5" fill="#c4c4c4" text-anchor="middle" >361</text><text x="655.7" y="598.1" font-size="10.5" fill="#c4c4c4" text-anchor="middle" >304</text><text x="658.6" y="601.2" font-size="10.5" fill="#c4c4c4" text-anchor="middle" >115</text><text x="661.6" y="600.6" font-size="10.5" fill="#c4c4c4" text-anchor="middle" >151</text><text x="664.5" y="598.0" font-size="10.5" fill="#c4c4c4" text-anchor="middle" >314</text><text x="667.5" y="597.7" font-size="10.5" fill="#c4c4c4" text-anchor="middle" >331</text><text x="670.4" y="599.2" font-size="10.5" fill="#c4c4c4" text-anchor="middle" >239</text><text x="673.4" y="599.0" font-size="10.5" fill="#c4c4c4" text-anchor="middle" >247</text><text x="676.3" y="599.6" font-size="10.5" fill="#c4c4c4" text-anchor="middle" >210</text><text x="679.3" y="601.5" font-size="10.5" fill="#c4c4c4" text-anchor="middle" >94</text><text x="682.2" y="601.0" font-size="10.5" fill="#c4c4c4" text-anchor="middle" >123</text><text x="685.2" y="599.9" font-size="10.5" fill="#c4c4c4" text-anchor="middle" >193</text><text x="688.1" y="599.9" font-size="10.5" fill="#c4c4c4" text-anchor="middle" >192</text><text x="691.1" y="599.7" font-size="10.5" fill="#c4c4c4" text-anchor="middle" >208</text><text x="694.0" y="600.1" font-size="10.5" fill="#c4c4c4" text-anchor="middle" >184</text><text x="697.0" y="600.4" font-size="10.5" fill="#c4c4c4" text-anchor="middle" >163</text><text x="699.9" y="601.4" font-size="10.5" fill="#c4c4c4" text-anchor="middle" >103</text><text x="702.9" y="601.3" font-size="10.5" fill="#c4c4c4" text-anchor="middle" >105</text><text x="705.8" y="599.3" font-size="10.5" fill="#c4c4c4" text-anchor="middle" >232</text><text x="708.8" y="598.9" font-size="10.5" fill="#c4c4c4" text-anchor="middle" >259</text><text x="711.7" y="599.3" font-size="10.5" fill="#c4c4c4" text-anchor="middle" >231</text><text x="714.7" y="599.3" font-size="10.5" fill="#c4c4c4" text-anchor="middle" >234</text><text x="717.6" y="599.2" font-size="10.5" fill="#c4c4c4" text-anchor="middle" >235</text><text x="720.6" y="601.4" font-size="10.5" fill="#c4c4c4" text-anchor="middle" >98</text><text x="723.5" y="601.0" font-size="10.5" fill="#c4c4c4" text-anchor="middle" >126</text><text x="726.5" y="599.3" font-size="10.5" fill="#c4c4c4" text-anchor="middle" >231</text><text x="729.4" y="599.0" font-size="10.5" fill="#c4c4c4" text-anchor="middle" >253</text><text x="732.4" y="599.9" font-size="10.5" fill="#c4c4c4" text-anchor="middle" >195</text><text x="735.3" y="599.6" font-size="10.5" fill="#c4c4c4" text-anchor="middle" >212</text><text x="738.3" y="600.1" font-size="10.5" fill="#c4c4c4" text-anchor="middle" >179</text><text x="741.2" y="601.2" font-size="10.5" fill="#c4c4c4" text-anchor="middle" >113</text><text x="744.2" y="601.0" font-size="10.5" fill="#c4c4c4" text-anchor="middle" >128</text><text x="747.1" y="599.0" font-size="10.5" fill="#c4c4c4" text-anchor="middle" >247</text><text x="750.1" y="600.0" font-size="10.5" fill="#c4c4c4" text-anchor="middle" >185</text><text x="753.0" y="599.8" font-size="10.5" fill="#c4c4c4" text-anchor="middle" >197</text><text x="756.0" y="599.5" font-size="10.5" fill="#c4c4c4" text-anchor="middle" >220</text><text x="758.9" y="599.8" font-size="10.5" fill="#c4c4c4" text-anchor="middle" >201</text><text x="761.9" y="601.6" font-size="10.5" fill="#c4c4c4" text-anchor="middle" >89</text><text x="764.8" y="601.3" font-size="10.5" fill="#c4c4c4" text-anchor="middle" >106</text><text x="767.8" y="600.3" font-size="10.5" fill="#c4c4c4" text-anchor="middle" >166</text><text x="770.7" y="599.9" font-size="10.5" fill="#c4c4c4" text-anchor="middle" >195</text><text x="773.7" y="600.3" font-size="10.5" fill="#c4c4c4" text-anchor="middle" >166</text><text x="776.6" y="599.7" font-size="10.5" fill="#c4c4c4" text-anchor="middle" >209</text><text x="779.6" y="600.2" font-size="10.5" fill="#c4c4c4" text-anchor="middle" >177</text><text x="782.5" y="601.9" font-size="10.5" fill="#c4c4c4" text-anchor="middle" >71</text><text x="785.5" y="601.4" font-size="10.5" fill="#c4c4c4" text-anchor="middle" >97</text><text x="788.4" y="599.9" font-size="10.5" fill="#c4c4c4" text-anchor="middle" >196</text><text x="791.4" y="600.1" font-size="10.5" fill="#c4c4c4" text-anchor="middle" >181</text><text x="794.3" y="600.0" font-size="10.5" fill="#c4c4c4" text-anchor="middle" >189</text><text x="797.3" y="600.5" font-size="10.5" fill="#c4c4c4" text-anchor="middle" >155</text><text x="800.2" y="601.1" font-size="10.5" fill="#c4c4c4" text-anchor="middle" >118</text><text x="803.2" y="601.9" font-size="10.5" fill="#c4c4c4" text-anchor="middle" >66</text><text x="806.1" y="601.3" font-size="10.5" fill="#c4c4c4" text-anchor="middle" >105</text><text x="809.1" y="600.6" font-size="10.5" fill="#c4c4c4" text-anchor="middle" >147</text><text x="812.0" y="600.6" font-size="10.5" fill="#c4c4c4" text-anchor="middle" >153</text><text x="815.0" y="600.4" font-size="10.5" fill="#c4c4c4" text-anchor="middle" >160</text><text x="817.9" y="600.4" font-size="10.5" fill="#c4c4c4" text-anchor="middle" >162</text><text x="820.9" y="600.8" font-size="10.5" fill="#c4c4c4" text-anchor="middle" >139</text><text x="823.8" y="601.6" font-size="10.5" fill="#c4c4c4" text-anchor="middle" >90</text><text x="826.8" y="601.6" font-size="10.5" fill="#c4c4c4" text-anchor="middle" >90</text><text x="829.7" y="600.7" font-size="10.5" fill="#c4c4c4" text-anchor="middle" >141</text><text x="832.7" y="599.7" font-size="10.5" fill="#c4c4c4" text-anchor="middle" >209</text><text x="835.6" y="599.7" font-size="10.5" fill="#c4c4c4" text-anchor="middle" >207</text><text x="838.6" y="599.5" font-size="10.5" fill="#c4c4c4" text-anchor="middle" >217</text><text x="841.5" y="600.6" font-size="10.5" fill="#c4c4c4" text-anchor="middle" >152</text><text x="844.5" y="601.4" font-size="10.5" fill="#c4c4c4" text-anchor="middle" >98</text><text x="847.4" y="600.9" font-size="10.5" fill="#c4c4c4" text-anchor="middle" >132</text><text x="850.4" y="600.3" font-size="10.5" fill="#c4c4c4" text-anchor="middle" >168</text><text x="853.3" y="599.6" font-size="10.5" fill="#c4c4c4" text-anchor="middle" >210</text><text x="856.3" y="599.5" font-size="10.5" fill="#c4c4c4" text-anchor="middle" >220</text><text x="859.2" y="599.7" font-size="10.5" fill="#c4c4c4" text-anchor="middle" >208</text><text x="862.2" y="600.3" font-size="10.5" fill="#c4c4c4" text-anchor="middle" >169</text><text x="865.1" y="601.7" font-size="10.5" fill="#c4c4c4" text-anchor="middle" >82</text><text x="868.1" y="601.2" font-size="10.5" fill="#c4c4c4" text-anchor="middle" >113</text><text x="871.0" y="600.1" font-size="10.5" fill="#c4c4c4" text-anchor="middle" >181</text><text x="874.0" y="600.3" font-size="10.5" fill="#c4c4c4" text-anchor="middle" >170</text><text x="876.9" y="599.6" font-size="10.5" fill="#c4c4c4" text-anchor="middle" >215</text><text x="879.9" y="599.9" font-size="10.5" fill="#c4c4c4" text-anchor="middle" >192</text><text x="882.8" y="599.8" font-size="10.5" fill="#c4c4c4" text-anchor="middle" >202</text><text x="885.8" y="601.8" font-size="10.5" fill="#c4c4c4" text-anchor="middle" >78</text><text x="888.7" y="600.6" font-size="10.5" fill="#c4c4c4" text-anchor="middle" >150</text><text x="891.7" y="599.3" font-size="10.5" fill="#c4c4c4" text-anchor="middle" >234</text><text x="894.6" y="598.9" font-size="10.5" fill="#c4c4c4" text-anchor="middle" >257</text><text x="897.6" y="598.6" font-size="10.5" fill="#c4c4c4" text-anchor="middle" >276</text><text x="900.5" y="598.4" font-size="10.5" fill="#c4c4c4" text-anchor="middle" >286</text><text x="903.5" y="599.3" font-size="10.5" fill="#c4c4c4" text-anchor="middle" >233</text><text x="906.4" y="600.4" font-size="10.5" fill="#c4c4c4" text-anchor="middle" >164</text><text x="909.4" y="600.8" font-size="10.5" fill="#c4c4c4" text-anchor="middle" >138</text><text x="912.3" y="596.0" font-size="10.5" fill="#c4c4c4" text-anchor="middle" >436</text><text x="915.3" y="596.2" font-size="10.5" fill="#c4c4c4" text-anchor="middle" >425</text><text x="918.2" y="596.0" font-size="10.5" fill="#c4c4c4" text-anchor="middle" >437</text><text x="921.2" y="594.7" font-size="10.5" fill="#c4c4c4" text-anchor="middle" >520</text><text x="924.1" y="594.7" font-size="10.5" fill="#c4c4c4" text-anchor="middle" >516</text><text x="927.1" y="597.0" font-size="10.5" fill="#c4c4c4" text-anchor="middle" >378</text><text x="930.0" y="599.6" font-size="10.5" fill="#c4c4c4" text-anchor="middle" >210</text><text x="933.0" y="590.4" font-size="10.5" fill="#c4c4c4" text-anchor="middle" >785</text><text x="935.9" y="589.9" font-size="10.5" fill="#c4c4c4" text-anchor="middle" >819</text><text x="938.9" y="588.4" font-size="10.5" fill="#c4c4c4" text-anchor="middle" >914</text><text x="941.8" y="587.0" font-size="10.5" fill="#c4c4c4" text-anchor="middle" >998</text><text x="944.8" y="586.3" font-size="10.5" fill="#c4c4c4" text-anchor="middle" >1k</text><text x="947.7" y="593.2" font-size="10.5" fill="#c4c4c4" text-anchor="middle" >612</text><text x="950.7" y="596.3" font-size="10.5" fill="#c4c4c4" text-anchor="middle" >420</text><text x="953.6" y="586.6" font-size="10.5" fill="#c4c4c4" text-anchor="middle" >1k</text><text x="956.6" y="581.6" font-size="10.5" fill="#c4c4c4" text-anchor="middle" >1k</text><text x="959.5" y="579.4" font-size="10.5" fill="#c4c4c4" text-anchor="middle" >1k</text><text x="962.5" y="577.5" font-size="10.5" fill="#c4c4c4" text-anchor="middle" >2k</text><text x="965.4" y="577.6" font-size="10.5" fill="#c4c4c4" text-anchor="middle" >2k</text><text x="968.4" y="586.3" font-size="10.5" fill="#c4c4c4" text-anchor="middle" >1k</text><text x="971.3" y="592.1" font-size="10.5" fill="#c4c4c4" text-anchor="middle" >680</text><text x="974.3" y="567.1" font-size="10.5" fill="#c4c4c4" text-anchor="middle" >2k</text><text x="986.1" y="563.8" font-size="10.5" fill="#c4c4c4" text-anchor="middle" >2k</text><text x="989.0" y="573.2" font-size="10.5" fill="#c4c4c4" text-anchor="middle" >2k</text><text x="992.0" y="583.4" font-size="10.5" fill="#c4c4c4" text-anchor="middle" >1k</text><text x="994.9" y="564.2" font-size="10.5" fill="#c4c4c4" text-anchor="middle" >2k</text></g>
</svg>
<div class="abs" style="left:248px;top:638px;width:125px;height:28px;background:#222;border:1px solid #333;border-top:none;border-bottom:3px solid #1a86d0"></div>
<div class="abs" style="left:378px;top:638px;width:161px;height:30px;background:#000;border:1px solid #333"></div>
<div class="abs" style="left:545px;top:638px;width:159px;height:30px;background:#000;border:1px solid #333"></div>
<div class="t" style="left:260.3px;top:646.3px;font-size:12.6px;color:#d0d0d0;transform:scaleX(1.0099);">Заболели по дни</div>
<div class="t" style="left:390.0px;top:646.3px;font-size:12.6px;color:#d0d0d0;transform:scaleX(1.0005);">Заболели с натрупване</div>
<div class="t" style="left:556.4px;top:646.3px;font-size:12.6px;color:#d0d0d0;transform:scaleX(1.0300);">Карантинирани по дни</div>
<div class="panel" style="left:1040px;top:55px;width:220px;height:80px;background:#002673"></div>
<div class="t" style="left:1086.2px;top:63.1px;font-size:27.6px;color:#fff;transform:scaleX(1.0612);">Мобилна</div>
<div class="t" style="left:1101.5px;top:96.1px;font-size:27.6px;color:#fff;transform:scaleX(1.0813);">версия</div>
<div class="panel" style="left:1040px;top:145px;width:220px;height:530px"></div>
<div class="t" style="left:1044.8px;top:155.8px;font-size:14.4px;color:#ccc;transform:scaleX(1.0261);">Брой карантинирани по</div>
<div class="t" style="left:1045.5px;top:176.8px;font-size:14.4px;color:#ccc;transform:scaleX(1.0388);">области</div>
<svg width="1257" height="666" viewBox="0 0 1257 666">
<line x1="1145.3" y1="218.7" x2="1227" y2="218.7" stroke="#444" stroke-width="1" stroke-dasharray="3 3"/>
<line x1="1145.3" y1="248.1" x2="1227" y2="248.1" stroke="#444" stroke-width="1" stroke-dasharray="3 3"/>
<line x1="1145.3" y1="277.6" x2="1227" y2="277.6" stroke="#444" stroke-width="1" stroke-dasharray="3 3"/>
<line x1="1145.3" y1="307.0" x2="1227" y2="307.0" stroke="#444" stroke-width="1" stroke-dasharray="3 3"/>
<line x1="1145.3" y1="336.5" x2="1227" y2="336.5" stroke="#444" stroke-width="1" stroke-dasharray="3 3"/>
<line x1="1145.3" y1="365.9" x2="1227" y2="365.9" stroke="#444" stroke-width="1" stroke-dasharray="3 3"/>
<line x1="1145.3" y1="395.4" x2="1227" y2="395.4" stroke="#444" stroke-width="1" stroke-dasharray="3 3"/>
<line x1="1145.3" y1="424.9" x2="1227" y2="424.9" stroke="#444" stroke-width="1" stroke-dasharray="3 3"/>
<line x1="1145.3" y1="454.3" x2="1227" y2="454.3" stroke="#444" stroke-width="1" stroke-dasharray="3 3"/>
<line x1="1145.3" y1="483.8" x2="1227" y2="483.8" stroke="#444" stroke-width="1" stroke-dasharray="3 3"/>
<line x1="1145.3" y1="513.2" x2="1227" y2="513.2" stroke="#444" stroke-width="1" stroke-dasharray="3 3"/>
<line x1="1145.3" y1="542.6" x2="1227" y2="542.6" stroke="#444" stroke-width="1" stroke-dasharray="3 3"/>
<line x1="1145.3" y1="572.1" x2="1227" y2="572.1" stroke="#444" stroke-width="1" stroke-dasharray="3 3"/>
<line x1="1145.3" y1="601.5" x2="1227" y2="601.5" stroke="#444" stroke-width="1" stroke-dasharray="3 3"/>
<line x1="1227" y1="218.7" x2="1227" y2="631.5" stroke="#444" stroke-width="1" stroke-dasharray="3 3"/>
<line x1="1145.3" y1="631.5" x2="1227" y2="631.5" stroke="#777" stroke-width="1"/>
<line x1="1145.3" y1="218.7" x2="1145.3" y2="636" stroke="#777" stroke-width="1"/>
<line x1="1227" y1="631.5" x2="1227" y2="636" stroke="#777" stroke-width="1"/>
<rect x="1145.3" y="220.4" width="47.1" height="12.5" fill="#ffaa00"/>
<text x="1195.4" y="231.7" font-size="12" fill="#bbb" text-anchor="start" >57.6k</text>
<text x="1132.5" y="231.3" font-size="11.8" fill="#aaa" text-anchor="end" >София-град</text>
<line x1="1140" y1="226.7" x2="1145.3" y2="226.7" stroke="#777" stroke-width="1"/>
<rect x="1145.3" y="235.1" width="23.3" height="12.5" fill="#ffaa00"/>
<text x="1171.6" y="246.4" font-size="12" fill="#bbb" text-anchor="start" >28.5k</text>
<rect x="1145.3" y="249.9" width="16.8" height="12.5" fill="#ffaa00"/>
<text x="1165.1" y="261.2" font-size="12" fill="#bbb" text-anchor="start" >20.6k</text>
<text x="1132.5" y="260.8" font-size="11.8" fill="#aaa" text-anchor="end" >Бургас</text>
<line x1="1140" y1="256.1" x2="1145.3" y2="256.1" stroke="#777" stroke-width="1"/>
<rect x="1145.3" y="264.6" width="16.7" height="12.5" fill="#ffaa00"/>
<text x="1165.0" y="275.9" font-size="12" fill="#bbb" text-anchor="start" >20.5k</text>
<rect x="1145.3" y="279.3" width="16.1" height="12.5" fill="#ffaa00"/>
<text x="1164.4" y="290.6" font-size="12" fill="#bbb" text-anchor="start" >19.7k</text>
<text x="1132.5" y="290.2" font-size="11.8" fill="#aaa" text-anchor="end" >Благоевград</text>
<line x1="1140" y1="285.6" x2="1145.3" y2="285.6" stroke="#777" stroke-width="1"/>
<rect x="1145.3" y="294.0" width="15.0" height="12.5" fill="#ffaa00"/>
<text x="1163.3" y="305.3" font-size="12" fill="#bbb" text-anchor="start" >18.4k</text>
<rect x="1145.3" y="308.8" width="12.6" height="12.5" fill="#ffaa00"/>
<text x="1160.9" y="320.1" font-size="12" fill="#bbb" text-anchor="start" >15.4k</text>
<text x="1132.5" y="319.7" font-size="11.8" fill="#aaa" text-anchor="end" >Пазарджик</text>
<line x1="1140" y1="315.0" x2="1145.3" y2="315.0" stroke="#777" stroke-width="1"/>
<rect x="1145.3" y="323.5" width="12.0" height="12.5" fill="#ffaa00"/>
<text x="1160.3" y="334.8" font-size="12" fill="#bbb" text-anchor="start" >14.7k</text>
<rect x="1145.3" y="338.2" width="10.3" height="12.5" fill="#ffaa00"/>
<text x="1158.6" y="349.5" font-size="12" fill="#bbb" text-anchor="start" >12.6k</text>
<text x="1132.5" y="349.1" font-size="11.8" fill="#aaa" text-anchor="end" >Хасково</text>
<line x1="1140" y1="344.5" x2="1145.3" y2="344.5" stroke="#777" stroke-width="1"/>
<rect x="1145.3" y="352.9" width="9.6" height="12.5" fill="#ffaa00"/>
<text x="1157.9" y="364.2" font-size="12" fill="#bbb" text-anchor="start" >11.7k</text>
<rect x="1145.3" y="367.7" width="8.6" height="12.5" fill="#ffaa00"/>
<text x="1156.9" y="379.0" font-size="12" fill="#bbb" text-anchor="start" >10.5k</text>
<text x="1132.5" y="378.6" font-size="11.8" fill="#aaa" text-anchor="end" >Плевен</text>
<line x1="1140" y1="373.9" x2="1145.3" y2="373.9" stroke="#777" stroke-width="1"/>
<rect x="1145.3" y="382.4" width="8.4" height="12.5" fill="#ffaa00"/>
<text x="1156.7" y="393.7" font-size="12" fill="#bbb" text-anchor="start" >10.3k</text>
<rect x="1145.3" y="397.1" width="8.3" height="12.5" fill="#ffaa00"/>
<text x="1156.6" y="408.4" font-size="12" fill="#bbb" text-anchor="start" >10.2k</text>
<text x="1132.5" y="408.0" font-size="11.8" fill="#aaa" text-anchor="end" >Русе</text>
<line x1="1140" y1="403.4" x2="1145.3" y2="403.4" stroke="#777" stroke-width="1"/>
<rect x="1145.3" y="411.8" width="7.4" height="12.5" fill="#ffaa00"/>
<text x="1155.7" y="423.1" font-size="12" fill="#bbb" text-anchor="start" >9k</text>
<rect x="1145.3" y="426.6" width="7.0" height="12.5" fill="#ffaa00"/>
<text x="1155.3" y="437.9" font-size="12" fill="#bbb" text-anchor="start" >8.6k</text>
<text x="1132.5" y="437.5" font-size="11.8" fill="#aaa" text-anchor="end" >София</text>
<line x1="1140" y1="432.8" x2="1145.3" y2="432.8" stroke="#777" stroke-width="1"/>
<rect x="1145.3" y="441.3" width="6.9" height="12.5" fill="#ffaa00"/>
<text x="1155.2" y="452.6" font-size="12" fill="#bbb" text-anchor="start" >8.4k</text>
<rect x="1145.3" y="456.0" width="6.7" height="12.5" fill="#ffaa00"/>
<text x="1155.0" y="467.3" font-size="12" fill="#bbb" text-anchor="start" >8.2k</text>
<text x="1132.5" y="466.9" font-size="11.8" fill="#aaa" text-anchor="end" >Разград</text>
<line x1="1140" y1="462.3" x2="1145.3" y2="462.3" stroke="#777" stroke-width="1"/>
<rect x="1145.3" y="470.7" width="5.9" height="12.5" fill="#ffaa00"/>
<text x="1154.2" y="482.0" font-size="12" fill="#bbb" text-anchor="start" >7.2k</text>
<rect x="1145.3" y="485.5" width="5.6" height="12.5" fill="#ffaa00"/>
<text x="1153.9" y="496.8" font-size="12" fill="#bbb" text-anchor="start" >6.8k</text>
<text x="1132.5" y="496.4" font-size="11.8" fill="#aaa" text-anchor="end" >Силистра</text>
<line x1="1140" y1="491.7" x2="1145.3" y2="491.7" stroke="#777" stroke-width="1"/>
<rect x="1145.3" y="500.2" width="5.4" height="12.5" fill="#ffaa00"/>
<text x="1153.7" y="511.5" font-size="12" fill="#bbb" text-anchor="start" >6.6k</text>
<rect x="1145.3" y="514.9" width="5.3" height="12.5" fill="#ffaa00"/>
<text x="1153.6" y="526.2" font-size="12" fill="#bbb" text-anchor="start" >6.5k</text>
<text x="1132.5" y="525.8" font-size="11.8" fill="#aaa" text-anchor="end" >Монтана</text>
<line x1="1140" y1="521.2" x2="1145.3" y2="521.2" stroke="#777" stroke-width="1"/>
<rect x="1145.3" y="529.6" width="5.3" height="12.5" fill="#ffaa00"/>
<text x="1153.6" y="540.9" font-size="12" fill="#bbb" text-anchor="start" >6.5k</text>
<rect x="1145.3" y="544.4" width="4.9" height="12.5" fill="#ffaa00"/>
<text x="1153.2" y="555.7" font-size="12" fill="#bbb" text-anchor="start" >6k</text>
<text x="1132.5" y="555.3" font-size="11.8" fill="#aaa" text-anchor="end" >Враца</text>
<line x1="1140" y1="550.6" x2="1145.3" y2="550.6" stroke="#777" stroke-width="1"/>
<rect x="1145.3" y="559.1" width="4.6" height="12.5" fill="#ffaa00"/>
<text x="1152.9" y="570.4" font-size="12" fill="#bbb" text-anchor="start" >5.6k</text>
<rect x="1145.3" y="573.8" width="4.1" height="12.5" fill="#ffaa00"/>
<text x="1152.4" y="585.1" font-size="12" fill="#bbb" text-anchor="start" >5k</text>
<text x="1132.5" y="584.7" font-size="11.8" fill="#aaa" text-anchor="end" >Габрово</text>
<line x1="1140" y1="580.1" x2="1145.3" y2="580.1" stroke="#777" stroke-width="1"/>
<rect x="1145.3" y="588.5" width="3.9" height="12.5" fill="#ffaa00"/>
<text x="1152.2" y="599.8" font-size="12" fill="#bbb" text-anchor="start" >4.8k</text>
<rect x="1145.3" y="603.3" width="3.8" height="12.5" fill="#ffaa00"/>
<text x="1152.1" y="614.6" font-size="12" fill="#bbb" text-anchor="start" >4.7k</text>
<text x="1132.5" y="614.2" font-size="11.8" fill="#aaa" text-anchor="end" >Видин</text>
<line x1="1140" y1="609.5" x2="1145.3" y2="609.5" stroke="#777" stroke-width="1"/>
<rect x="1145.3" y="618.0" width="3.5" height="12.5" fill="#ffaa00"/>
<text x="1151.8" y="629.3" font-size="12" fill="#bbb" text-anchor="start" >4.3k</text>
<text x="1145.0" y="654.0" font-size="12" fill="#aaa" text-anchor="middle" >0</text>
<text x="1227.0" y="654.0" font-size="12" fill="#aaa" text-anchor="middle" >100k</text>
</svg>
</body>
</html>
